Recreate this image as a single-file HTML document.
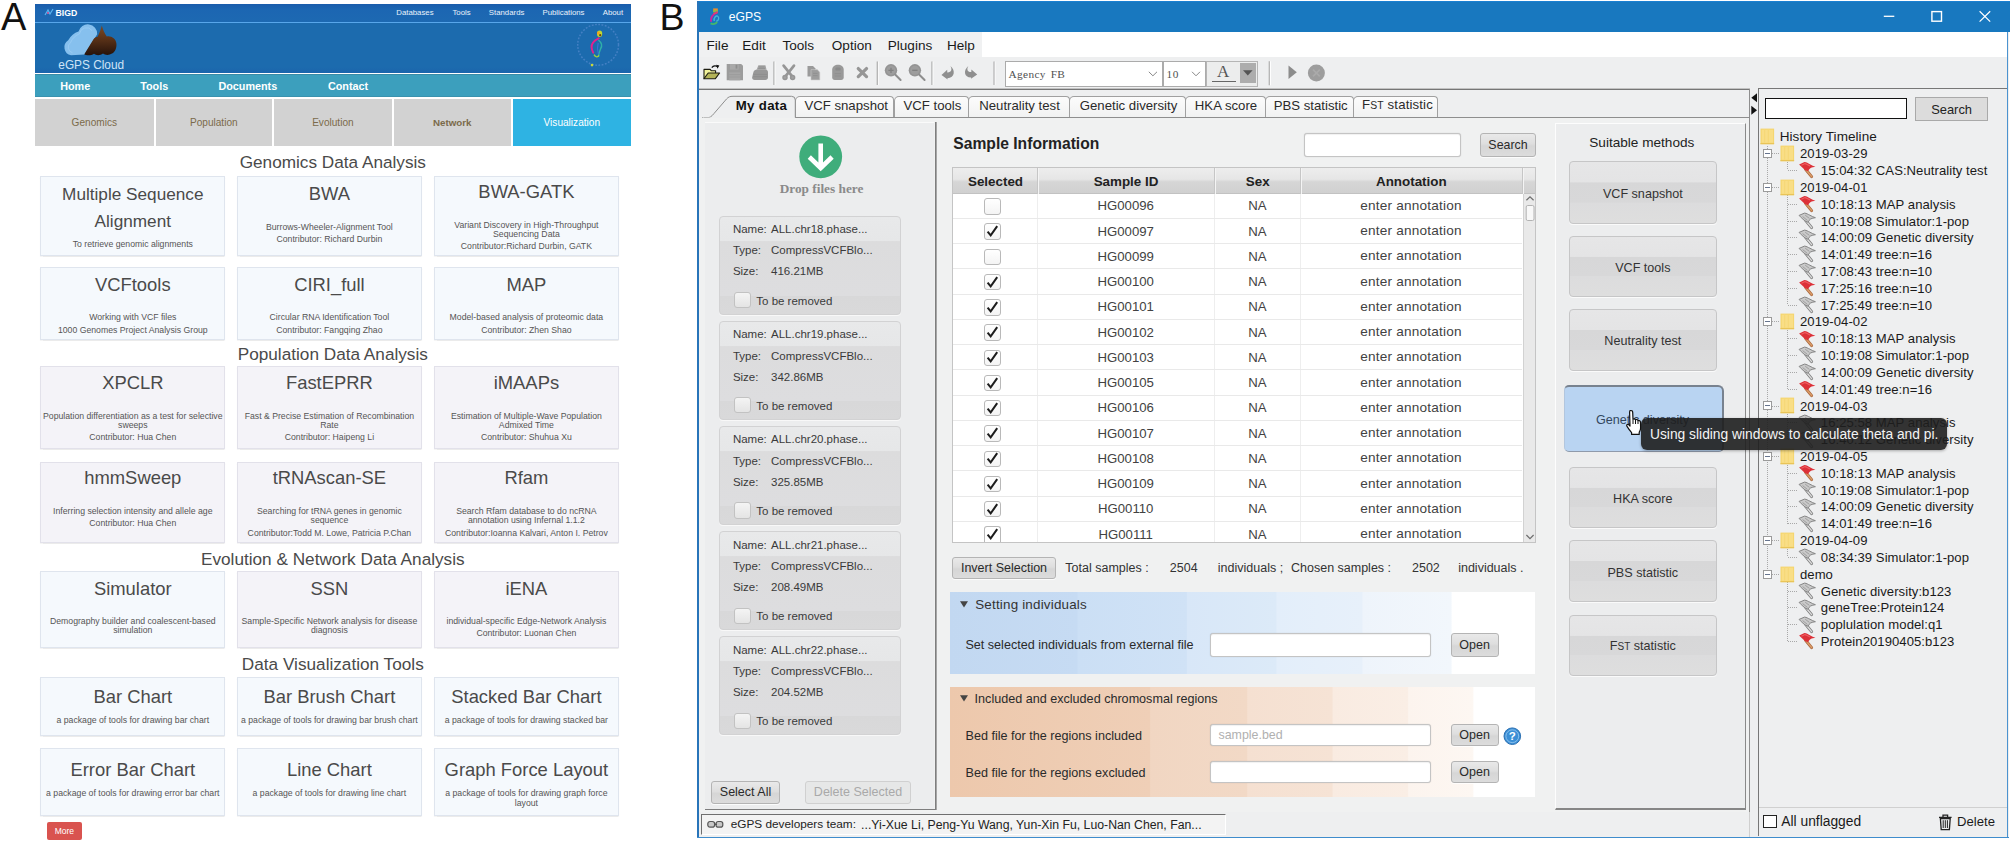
<!DOCTYPE html>
<html lang="en"><head><meta charset="utf-8"><title>eGPS</title>
<style>
html,body{margin:0;padding:0;background:#fff;}
body{width:2010px;height:844px;position:relative;overflow:hidden;font-family:"Liberation Sans",sans-serif;}
#root{position:absolute;left:0;top:0;width:2010px;height:844px;overflow:hidden;}
#root div,#root svg.a{position:absolute;}
.t{white-space:nowrap;}
</style></head><body><div id="root">
<div class="t" style='top:-8.0px;font-size:38px;line-height:51px;color:#111;left:1.0px;'>A</div>
<div style="left:35.0px;top:4.0px;width:596.0px;height:18.4px;background:linear-gradient(#1a5cab,#1c66b2 30%,#1d69b2);"></div>
<div style="left:35.0px;top:22.2px;width:596.0px;height:1.0px;background:#58a6ea;"></div>
<div style="left:35.0px;top:23.2px;width:596.0px;height:49.8px;background:linear-gradient(#1c6bae 0,#1c6bae 88%,#1b64ac 100%);"></div>
<div style="left:35.0px;top:74.3px;width:596.0px;height:22.7px;background:#3c9fbd;border-top:1px solid #3a8aa6;border-bottom:1px solid #3a92ae;box-sizing:border-box;"></div>
<svg class="a" style="left:43.5px;top:8px" width="10" height="10" viewBox="0 0 10 10"><path d="M1 7 L4 2 L6 6 L9 1" stroke="#5bb4f0" stroke-width="1.2" fill="none"/><circle cx="4" cy="5" r="1" fill="#e0559a"/></svg>
<div class="t" style='top:7.0px;font-size:8.7px;line-height:13px;color:#fff;font-weight:bold;left:55.6px;'>BIGD</div>
<div class="t" style='top:7.3px;font-size:7.8px;line-height:12px;color:#eaf2fb;left:414.9px;transform:translateX(-50%);'>Databases</div>
<div class="t" style='top:7.3px;font-size:7.8px;line-height:12px;color:#eaf2fb;left:461.5px;transform:translateX(-50%);'>Tools</div>
<div class="t" style='top:7.3px;font-size:7.8px;line-height:12px;color:#eaf2fb;left:506.6px;transform:translateX(-50%);'>Standards</div>
<div class="t" style='top:7.3px;font-size:7.8px;line-height:12px;color:#eaf2fb;left:563.5px;transform:translateX(-50%);'>Publications</div>
<div class="t" style='top:7.3px;font-size:7.8px;line-height:12px;color:#eaf2fb;left:612.9px;transform:translateX(-50%);'>About</div>
<svg class="a" style="left:60px;top:23px" width="62" height="35" viewBox="60 23 62 35">
<defs><linearGradient id="brn" x1="0" y1="0" x2="0" y2="1"><stop offset="0" stop-color="#7a4a26"/><stop offset=".45" stop-color="#5a3218"/><stop offset="1" stop-color="#26120a"/></linearGradient></defs>
<path d="M71 55.3 A8.3 8.3 0 0 1 68.2 40.2 Q72 33.5 78.5 31.5 A9.5 9.5 0 0 1 97.2 34.2 L84.5 54.6 Z" fill="#86c0ee"/>
<path d="M72.5 52.8 A5.8 5.8 0 0 1 70.5 42.6 Q73.5 36 79.5 33.8 A7 7 0 0 1 92 30.5" stroke="#a9d4f6" stroke-width=".7" fill="none" opacity=".7"/>
<path d="M84.3 54.2 L93.5 39.2 C94.5 37.6 96 37 97.6 36.8 C99.5 33 100.8 29 101.8 25.4 C102.8 29 104.5 33.5 106.8 36.4 C111 35.4 116 38.5 116.4 43.5 C116.9 48 115 52 112 53.6 C109 55.6 105 55.2 103 53.6 C100 55.8 96 55.6 94 53.8 C91 55.8 86 55.6 84.3 54.2 Z" fill="url(#brn)"/>
</svg>
<div class="t" style='top:57.0px;font-size:11.85px;line-height:17px;color:#cfe4f7;left:58.3px;'>eGPS Cloud</div>
<svg class="a" style="left:574px;top:22px" width="50" height="48" viewBox="574 22 50 48">
<circle cx="598.1" cy="44.8" r="20.4" fill="none" stroke="#5e8ed2" stroke-width="1.5" stroke-dasharray="1.8 1.5" opacity=".6"/>
<path d="M598.6 38.4 C594.5 40.5 591.2 44 591.6 47.5 C591.8 49.5 592.4 51 593.2 52.6" stroke="#e2218f" stroke-width="2" fill="none" stroke-linecap="round"/>
<path d="M598.4 40 C601.5 42.5 602.5 46 600.5 49 C599.5 51.5 598.6 54 598.4 56.6" stroke="#2fb0a8" stroke-width="1.4" fill="none"/>
<path d="M598.2 43 C597 47 597.4 51 598.4 54" stroke="#3b74d8" stroke-width="1.1" fill="none"/>
<path d="M594 54.6 C595.4 57.4 598 57.4 599 55.4" stroke="#9fd23c" stroke-width="1.3" fill="none"/>
<ellipse cx="599.6" cy="33.8" rx="2.6" ry="3.3" fill="#bfd730"/><circle cx="598.4" cy="33" r="1.5" fill="#f4a21f"/><circle cx="600.2" cy="35.2" r="1.1" fill="#6a3a1a"/>
<circle cx="592" cy="65.1" r="1.3" fill="#c9d83a"/>
</svg>
<div class="t" style='top:78.0px;font-size:10.8px;line-height:16px;color:#fff;font-weight:bold;left:75.2px;transform:translateX(-50%);'>Home</div>
<div class="t" style='top:78.0px;font-size:10.8px;line-height:16px;color:#fff;font-weight:bold;left:154.2px;transform:translateX(-50%);'>Tools</div>
<div class="t" style='top:78.0px;font-size:10.8px;line-height:16px;color:#fff;font-weight:bold;left:247.8px;transform:translateX(-50%);'>Documents</div>
<div class="t" style='top:78.0px;font-size:10.8px;line-height:16px;color:#fff;font-weight:bold;left:348.0px;transform:translateX(-50%);'>Contact</div>
<div style="left:35.0px;top:99.0px;width:118.7px;height:47.1px;background:#d2d2d2;"></div>
<div class="t" style='top:115.2px;font-size:10.1px;line-height:15px;color:#7b6a4a;left:94.3px;transform:translateX(-50%);'>Genomics</div>
<div style="left:155.7px;top:99.0px;width:116.3px;height:47.1px;background:#d2d2d2;"></div>
<div class="t" style='top:115.2px;font-size:10.1px;line-height:15px;color:#7b6a4a;left:213.8px;transform:translateX(-50%);'>Population</div>
<div style="left:274.0px;top:99.0px;width:117.8px;height:47.1px;background:#d2d2d2;"></div>
<div class="t" style='top:115.2px;font-size:10.1px;line-height:15px;color:#7b6a4a;left:332.9px;transform:translateX(-50%);'>Evolution</div>
<div style="left:393.8px;top:99.0px;width:116.9px;height:47.1px;background:#d2d2d2;"></div>
<div class="t" style='top:115.2px;font-size:9.75px;line-height:15px;color:#7b6a4a;font-weight:bold;left:452.2px;transform:translateX(-50%);'>Network</div>
<div style="left:512.5px;top:99.0px;width:118.5px;height:47.1px;background:#2eb3e3;"></div>
<div class="t" style='top:115.2px;font-size:10.1px;line-height:15px;color:#fff;left:571.8px;transform:translateX(-50%);'>Visualization</div>
<div class="t" style='top:150.3px;font-size:17.2px;line-height:24px;color:#4a4a4a;left:332.8px;transform:translateX(-50%);'>Genomics Data Analysis</div>
<div class="t" style='top:341.5px;font-size:17.2px;line-height:24px;color:#4a4a4a;left:332.8px;transform:translateX(-50%);'>Population Data Analysis</div>
<div class="t" style='top:547.1px;font-size:17.2px;line-height:24px;color:#4a4a4a;left:332.8px;transform:translateX(-50%);'>Evolution &amp; Network Data Analysis</div>
<div class="t" style='top:651.6px;font-size:17.2px;line-height:24px;color:#4a4a4a;left:332.8px;transform:translateX(-50%);'>Data Visualization Tools</div>
<div style="left:40.2px;top:176.4px;width:185.2px;height:79.2px;background:#f5f9fd;border:1px solid #dfe5ee;box-sizing:border-box;box-shadow:0 0.5px 1px rgba(0,0,0,.08);"></div>
<div class="t" style='top:181.6px;font-size:17.2px;line-height:24px;color:#4a4a4a;left:132.8px;transform:translateX(-50%);'>Multiple Sequence</div>
<div class="t" style='top:209.2px;font-size:17.2px;line-height:24px;color:#4a4a4a;left:132.8px;transform:translateX(-50%);'>Alignment</div>
<div class="t" style='top:238.2px;font-size:8.7px;line-height:13px;color:#555;left:132.8px;transform:translateX(-50%);'>To retrieve genomic alignments</div>
<div style="left:237.1px;top:176.4px;width:184.7px;height:79.2px;background:#f5f9fd;border:1px solid #dfe5ee;box-sizing:border-box;box-shadow:0 0.5px 1px rgba(0,0,0,.08);"></div>
<div class="t" style='top:180.9px;font-size:18.4px;line-height:26px;color:#4a4a4a;left:329.4px;transform:translateX(-50%);'>BWA</div>
<div class="t" style='top:220.9px;font-size:8.7px;line-height:13px;color:#555;left:329.4px;transform:translateX(-50%);'>Burrows-Wheeler-Alignment Tool</div>
<div class="t" style='top:233.1px;font-size:8.7px;line-height:13px;color:#555;left:329.4px;transform:translateX(-50%);'>Contributor: Richard Durbin</div>
<div style="left:433.7px;top:176.4px;width:185.4px;height:79.2px;background:#f5f9fd;border:1px solid #dfe5ee;box-sizing:border-box;box-shadow:0 0.5px 1px rgba(0,0,0,.08);"></div>
<div class="t" style='top:178.9px;font-size:18.4px;line-height:26px;color:#4a4a4a;left:526.4px;transform:translateX(-50%);'>BWA-GATK</div>
<div class="t" style='top:218.7px;font-size:8.7px;line-height:13px;color:#555;left:526.4px;transform:translateX(-50%);'>Variant Discovery in High-Throughput</div>
<div class="t" style='top:227.9px;font-size:8.7px;line-height:13px;color:#555;left:526.4px;transform:translateX(-50%);'>Sequencing Data</div>
<div class="t" style='top:240.0px;font-size:8.7px;line-height:13px;color:#555;left:526.4px;transform:translateX(-50%);'>Contributor:Richard Durbin, GATK</div>
<div style="left:40.2px;top:267.3px;width:185.2px;height:72.7px;background:#f5f9fd;border:1px solid #dfe5ee;box-sizing:border-box;box-shadow:0 0.5px 1px rgba(0,0,0,.08);"></div>
<div class="t" style='top:272.0px;font-size:18.4px;line-height:26px;color:#4a4a4a;left:132.8px;transform:translateX(-50%);'>VCFtools</div>
<div class="t" style='top:311.4px;font-size:8.7px;line-height:13px;color:#555;left:132.8px;transform:translateX(-50%);'>Working with VCF files</div>
<div class="t" style='top:323.8px;font-size:8.7px;line-height:13px;color:#555;left:132.8px;transform:translateX(-50%);'>1000 Genomes Project Analysis Group</div>
<div style="left:237.1px;top:267.3px;width:184.7px;height:72.7px;background:#f5f9fd;border:1px solid #dfe5ee;box-sizing:border-box;box-shadow:0 0.5px 1px rgba(0,0,0,.08);"></div>
<div class="t" style='top:272.0px;font-size:18.4px;line-height:26px;color:#4a4a4a;left:329.4px;transform:translateX(-50%);'>CIRI_full</div>
<div class="t" style='top:311.4px;font-size:8.7px;line-height:13px;color:#555;left:329.4px;transform:translateX(-50%);'>Circular RNA Identification Tool</div>
<div class="t" style='top:323.8px;font-size:8.7px;line-height:13px;color:#555;left:329.4px;transform:translateX(-50%);'>Contributor: Fangqing Zhao</div>
<div style="left:433.7px;top:267.3px;width:185.4px;height:72.7px;background:#f5f9fd;border:1px solid #dfe5ee;box-sizing:border-box;box-shadow:0 0.5px 1px rgba(0,0,0,.08);"></div>
<div class="t" style='top:272.0px;font-size:18.4px;line-height:26px;color:#4a4a4a;left:526.4px;transform:translateX(-50%);'>MAP</div>
<div class="t" style='top:311.4px;font-size:8.7px;line-height:13px;color:#555;left:526.4px;transform:translateX(-50%);'>Model-based analysis of proteomic data</div>
<div class="t" style='top:323.8px;font-size:8.7px;line-height:13px;color:#555;left:526.4px;transform:translateX(-50%);'>Contributor: Zhen Shao</div>
<div style="left:40.2px;top:365.6px;width:185.2px;height:83.9px;background:#f4f3f8;border:1px solid #e2e1ea;box-sizing:border-box;box-shadow:0 0.5px 1px rgba(0,0,0,.08);"></div>
<div class="t" style='top:370.1px;font-size:18.4px;line-height:26px;color:#4a4a4a;left:132.8px;transform:translateX(-50%);'>XPCLR</div>
<div class="t" style='top:409.5px;font-size:8.7px;line-height:13px;color:#555;left:132.8px;transform:translateX(-50%);'>Population differentiation as a test for selective</div>
<div class="t" style='top:418.8px;font-size:8.7px;line-height:13px;color:#555;left:132.8px;transform:translateX(-50%);'>sweeps</div>
<div class="t" style='top:431.2px;font-size:8.7px;line-height:13px;color:#555;left:132.8px;transform:translateX(-50%);'>Contributor: Hua Chen</div>
<div style="left:237.1px;top:365.6px;width:184.7px;height:83.9px;background:#f4f3f8;border:1px solid #e2e1ea;box-sizing:border-box;box-shadow:0 0.5px 1px rgba(0,0,0,.08);"></div>
<div class="t" style='top:370.1px;font-size:18.4px;line-height:26px;color:#4a4a4a;left:329.4px;transform:translateX(-50%);'>FastEPRR</div>
<div class="t" style='top:409.5px;font-size:8.7px;line-height:13px;color:#555;left:329.4px;transform:translateX(-50%);'>Fast &amp; Precise Estimation of Recombination</div>
<div class="t" style='top:418.8px;font-size:8.7px;line-height:13px;color:#555;left:329.4px;transform:translateX(-50%);'>Rate</div>
<div class="t" style='top:431.2px;font-size:8.7px;line-height:13px;color:#555;left:329.4px;transform:translateX(-50%);'>Contributor: Haipeng Li</div>
<div style="left:433.7px;top:365.6px;width:185.4px;height:83.9px;background:#f4f3f8;border:1px solid #e2e1ea;box-sizing:border-box;box-shadow:0 0.5px 1px rgba(0,0,0,.08);"></div>
<div class="t" style='top:370.1px;font-size:18.4px;line-height:26px;color:#4a4a4a;left:526.4px;transform:translateX(-50%);'>iMAAPs</div>
<div class="t" style='top:409.5px;font-size:8.7px;line-height:13px;color:#555;left:526.4px;transform:translateX(-50%);'>Estimation of Multiple-Wave Population</div>
<div class="t" style='top:418.8px;font-size:8.7px;line-height:13px;color:#555;left:526.4px;transform:translateX(-50%);'>Admixed Time</div>
<div class="t" style='top:431.2px;font-size:8.7px;line-height:13px;color:#555;left:526.4px;transform:translateX(-50%);'>Contributor: Shuhua Xu</div>
<div style="left:40.2px;top:461.6px;width:185.2px;height:81.7px;background:#f4f3f8;border:1px solid #e2e1ea;box-sizing:border-box;box-shadow:0 0.5px 1px rgba(0,0,0,.08);"></div>
<div class="t" style='top:465.4px;font-size:18.4px;line-height:26px;color:#4a4a4a;left:132.8px;transform:translateX(-50%);'>hmmSweep</div>
<div class="t" style='top:504.8px;font-size:8.7px;line-height:13px;color:#555;left:132.8px;transform:translateX(-50%);'>Inferring selection intensity and allele age</div>
<div class="t" style='top:517.2px;font-size:8.7px;line-height:13px;color:#555;left:132.8px;transform:translateX(-50%);'>Contributor: Hua Chen</div>
<div style="left:237.1px;top:461.6px;width:184.7px;height:81.7px;background:#f4f3f8;border:1px solid #e2e1ea;box-sizing:border-box;box-shadow:0 0.5px 1px rgba(0,0,0,.08);"></div>
<div class="t" style='top:465.4px;font-size:18.4px;line-height:26px;color:#4a4a4a;left:329.4px;transform:translateX(-50%);'>tRNAscan-SE</div>
<div class="t" style='top:504.8px;font-size:8.7px;line-height:13px;color:#555;left:329.4px;transform:translateX(-50%);'>Searching for tRNA genes in genomic</div>
<div class="t" style='top:514.1px;font-size:8.7px;line-height:13px;color:#555;left:329.4px;transform:translateX(-50%);'>sequence</div>
<div class="t" style='top:526.5px;font-size:8.7px;line-height:13px;color:#555;left:329.4px;transform:translateX(-50%);'>Contributor:Todd M. Lowe, Patricia P.Chan</div>
<div style="left:433.7px;top:461.6px;width:185.4px;height:81.7px;background:#f4f3f8;border:1px solid #e2e1ea;box-sizing:border-box;box-shadow:0 0.5px 1px rgba(0,0,0,.08);"></div>
<div class="t" style='top:465.4px;font-size:18.4px;line-height:26px;color:#4a4a4a;left:526.4px;transform:translateX(-50%);'>Rfam</div>
<div class="t" style='top:504.8px;font-size:8.7px;line-height:13px;color:#555;left:526.4px;transform:translateX(-50%);'>Search Rfam database to do ncRNA</div>
<div class="t" style='top:514.1px;font-size:8.7px;line-height:13px;color:#555;left:526.4px;transform:translateX(-50%);'>annotation using Infernal 1.1.2</div>
<div class="t" style='top:526.5px;font-size:8.7px;line-height:13px;color:#555;left:526.4px;transform:translateX(-50%);'>Contributor:Ioanna Kalvari, Anton I. Petrov</div>
<div style="left:40.2px;top:571.4px;width:185.2px;height:76.9px;background:#f5f9fd;border:1px solid #dfe5ee;box-sizing:border-box;box-shadow:0 0.5px 1px rgba(0,0,0,.08);"></div>
<div class="t" style='top:575.6px;font-size:18.4px;line-height:26px;color:#4a4a4a;left:132.8px;transform:translateX(-50%);'>Simulator</div>
<div class="t" style='top:614.8px;font-size:8.7px;line-height:13px;color:#555;left:132.8px;transform:translateX(-50%);'>Demography builder and coalescent-based</div>
<div class="t" style='top:624.2px;font-size:8.7px;line-height:13px;color:#555;left:132.8px;transform:translateX(-50%);'>simulation</div>
<div style="left:237.1px;top:571.4px;width:184.7px;height:76.9px;background:#f4f3f8;border:1px solid #e2e1ea;box-sizing:border-box;box-shadow:0 0.5px 1px rgba(0,0,0,.08);"></div>
<div class="t" style='top:575.6px;font-size:18.4px;line-height:26px;color:#4a4a4a;left:329.4px;transform:translateX(-50%);'>SSN</div>
<div class="t" style='top:614.8px;font-size:8.7px;line-height:13px;color:#555;left:329.4px;transform:translateX(-50%);'>Sample-Specific Network analysis for disease</div>
<div class="t" style='top:624.2px;font-size:8.7px;line-height:13px;color:#555;left:329.4px;transform:translateX(-50%);'>diagnosis</div>
<div style="left:433.7px;top:571.4px;width:185.4px;height:76.9px;background:#f4f3f8;border:1px solid #e2e1ea;box-sizing:border-box;box-shadow:0 0.5px 1px rgba(0,0,0,.08);"></div>
<div class="t" style='top:575.6px;font-size:18.4px;line-height:26px;color:#4a4a4a;left:526.4px;transform:translateX(-50%);'>iENA</div>
<div class="t" style='top:614.8px;font-size:8.7px;line-height:13px;color:#555;left:526.4px;transform:translateX(-50%);'>individual-specific Edge-Network Analysis</div>
<div class="t" style='top:627.4px;font-size:8.7px;line-height:13px;color:#555;left:526.4px;transform:translateX(-50%);'>Contributor: Luonan Chen</div>
<div style="left:40.2px;top:676.9px;width:185.2px;height:58.7px;background:#f5f9fd;border:1px solid #dfe5ee;box-sizing:border-box;box-shadow:0 0.5px 1px rgba(0,0,0,.08);"></div>
<div class="t" style='top:683.8px;font-size:18.4px;line-height:26px;color:#4a4a4a;left:132.8px;transform:translateX(-50%);'>Bar Chart</div>
<div class="t" style='top:713.9px;font-size:8.7px;line-height:13px;color:#555;left:132.8px;transform:translateX(-50%);'>a package of tools for drawing bar chart</div>
<div style="left:237.1px;top:676.9px;width:184.7px;height:58.7px;background:#f5f9fd;border:1px solid #dfe5ee;box-sizing:border-box;box-shadow:0 0.5px 1px rgba(0,0,0,.08);"></div>
<div class="t" style='top:683.8px;font-size:18.4px;line-height:26px;color:#4a4a4a;left:329.4px;transform:translateX(-50%);'>Bar Brush Chart</div>
<div class="t" style='top:713.9px;font-size:8.7px;line-height:13px;color:#555;left:329.4px;transform:translateX(-50%);'>a package of tools for drawing bar brush chart</div>
<div style="left:433.7px;top:676.9px;width:185.4px;height:58.7px;background:#f5f9fd;border:1px solid #dfe5ee;box-sizing:border-box;box-shadow:0 0.5px 1px rgba(0,0,0,.08);"></div>
<div class="t" style='top:683.8px;font-size:18.4px;line-height:26px;color:#4a4a4a;left:526.4px;transform:translateX(-50%);'>Stacked Bar Chart</div>
<div class="t" style='top:713.9px;font-size:8.7px;line-height:13px;color:#555;left:526.4px;transform:translateX(-50%);'>a package of tools for drawing stacked bar</div>
<div style="left:40.2px;top:748.2px;width:185.2px;height:67.4px;background:#f5f9fd;border:1px solid #dfe5ee;box-sizing:border-box;box-shadow:0 0.5px 1px rgba(0,0,0,.08);"></div>
<div class="t" style='top:756.6px;font-size:18.4px;line-height:26px;color:#4a4a4a;left:132.8px;transform:translateX(-50%);'>Error Bar Chart</div>
<div class="t" style='top:787.4px;font-size:8.7px;line-height:13px;color:#555;left:132.8px;transform:translateX(-50%);'>a package of tools for drawing error bar chart</div>
<div style="left:237.1px;top:748.2px;width:184.7px;height:67.4px;background:#f5f9fd;border:1px solid #dfe5ee;box-sizing:border-box;box-shadow:0 0.5px 1px rgba(0,0,0,.08);"></div>
<div class="t" style='top:756.6px;font-size:18.4px;line-height:26px;color:#4a4a4a;left:329.4px;transform:translateX(-50%);'>Line Chart</div>
<div class="t" style='top:787.4px;font-size:8.7px;line-height:13px;color:#555;left:329.4px;transform:translateX(-50%);'>a package of tools for drawing line chart</div>
<div style="left:433.7px;top:748.2px;width:185.4px;height:67.4px;background:#f5f9fd;border:1px solid #dfe5ee;box-sizing:border-box;box-shadow:0 0.5px 1px rgba(0,0,0,.08);"></div>
<div class="t" style='top:756.6px;font-size:18.4px;line-height:26px;color:#4a4a4a;left:526.4px;transform:translateX(-50%);'>Graph Force Layout</div>
<div class="t" style='top:787.4px;font-size:8.7px;line-height:13px;color:#555;left:526.4px;transform:translateX(-50%);'>a package of tools for drawing graph force</div>
<div class="t" style='top:796.8px;font-size:8.7px;line-height:13px;color:#555;left:526.4px;transform:translateX(-50%);'>layout</div>
<div style="left:46.8px;top:821.7px;width:35.2px;height:18.0px;background:#d9534f;border-radius:2px;"></div>
<div class="t" style='top:824.8px;font-size:8.5px;line-height:13px;color:#fff;left:64.4px;transform:translateX(-50%);'>More</div>
<div class="t" style='top:-8.0px;font-size:37.6px;line-height:51px;color:#111;left:659.6px;'>B</div>
<div style="left:697.5px;top:1.0px;width:1311.0px;height:836.5px;background:#eeeff0;"></div>
<div style="left:697.0px;top:1.4px;width:1313.0px;height:31.0px;background:#1878bf;border-top:1.4px solid #1a80d2;box-sizing:border-box;"></div>
<div style="left:697.0px;top:1.0px;width:2.0px;height:836.5px;background:#2874b9;"></div>
<div style="left:2007.4px;top:32.0px;width:1.1px;height:805.5px;background:#4b93d0;"></div>
<div style="left:697.0px;top:836.5px;width:1311.5px;height:1.1px;background:#3f8ccc;"></div>
<svg class="a" style="left:706px;top:5px" width="16" height="22" viewBox="706 5 16 22">
<rect x="713.2" y="8.4" width="4.6" height="3.8" fill="#e8912e"/><rect x="713.2" y="10.4" width="4.6" height="1.9" fill="#7cc04a"/>
<path d="M716.8 12.4 C713.4 14.2 710.6 17.4 711 21" stroke="#c42aa0" stroke-width="2" fill="none" stroke-linecap="round"/>
<path d="M713.4 13.6 L717.6 12.6" stroke="#e8406a" stroke-width="1.4"/>
<path d="M714.2 21 C713.6 17.6 716 15.4 717.6 16.2 C719.4 17.2 719 20.4 716.2 21.4" stroke="#45b4dc" stroke-width="1.3" fill="none"/>
<path d="M710.6 23.4 C713 24.6 716 24.2 717 21.8" stroke="#46b86a" stroke-width="1.8" fill="none"/>
</svg>
<div class="t" style='top:8.2px;font-size:12.2px;line-height:18px;color:#fff;left:728.7px;'>eGPS</div>
<svg class="a" style="left:1876px;top:6px" width="122" height="22" viewBox="0 0 122 22">
<path d="M7.8 10.3 H18.3" stroke="#fff" stroke-width="1.3"/>
<rect x="55.9" y="5.6" width="9.6" height="9.6" fill="none" stroke="#fff" stroke-width="1.4"/>
<path d="M103.6 5.2 L114.2 15.6 M114.2 5.2 L103.6 15.6" stroke="#fff" stroke-width="1.2"/>
</svg>
<div style="left:699.0px;top:32.3px;width:1308.3px;height:24.4px;background:#fff;"></div>
<div style="left:699.0px;top:32.3px;width:282.5px;height:24.4px;background:#f0f1f2;"></div>
<div class="t" style='top:35.8px;font-size:13.6px;line-height:20px;color:#1a1a1a;left:717.5px;transform:translateX(-50%);'>File</div>
<div class="t" style='top:35.8px;font-size:13.6px;line-height:20px;color:#1a1a1a;left:754.0px;transform:translateX(-50%);'>Edit</div>
<div class="t" style='top:35.8px;font-size:13.6px;line-height:20px;color:#1a1a1a;left:798.3px;transform:translateX(-50%);'>Tools</div>
<div class="t" style='top:35.8px;font-size:13.6px;line-height:20px;color:#1a1a1a;left:851.8px;transform:translateX(-50%);'>Option</div>
<div class="t" style='top:35.8px;font-size:13.6px;line-height:20px;color:#1a1a1a;left:910.0px;transform:translateX(-50%);'>Plugins</div>
<div class="t" style='top:35.8px;font-size:13.6px;line-height:20px;color:#1a1a1a;left:960.9px;transform:translateX(-50%);'>Help</div>
<div style="left:699.0px;top:88.0px;width:1050.5px;height:0.8px;background:#c2c2c2;"></div>
<div style="left:699.0px;top:88.7px;width:1050.5px;height:1.2px;background:#767676;"></div>
<svg class="a" style="left:700px;top:58px" width="640" height="30" viewBox="700 58 640 30">
<!-- open folder -->
<path d="M704 78.6 V69.4 H710.2 L711.4 70.8 H715.6 V73" fill="#f2f29a" stroke="#1c1c10" stroke-width="1.1" stroke-linejoin="round"/>
<path d="M703.8 78.8 L708.2 73 H719.6 L715.2 78.8 Z" fill="#b4b458" stroke="#1c1c10" stroke-width="1.1" stroke-linejoin="round"/>
<path d="M711.8 67.6 C713.4 65.6 716 65.4 717.6 66.8" stroke="#111" stroke-width="1.3" fill="none"/><path d="M716.2 64.8 L719.4 65.6 L717.4 68.8 Z" fill="#111"/>
<!-- save -->
<path d="M726.7 64 H741.2 L743 65.8 V80.3 H726.7 Z" fill="#9c9c9c"/>
<rect x="730" y="64" width="8.6" height="5.6" fill="#a9a9a9"/><rect x="735.6" y="64.8" width="1.8" height="3.8" fill="#8e8e8e"/>
<rect x="729.2" y="72.4" width="11.2" height="7.9" fill="#a6a6a6"/><path d="M729.2 74.6 H740.4 M729.2 77 H740.4" stroke="#9a9a9a" stroke-width=".7"/>
<!-- print -->
<path d="M753.4 72.2 C753.8 70.4 755.6 69.6 757 69.6 H765 C766.8 69.6 768 70.6 768 72.4 V77.6 C768 79.2 766.8 79.9 765.4 79.9 H754.6 C753 79.9 752.1 79 752.1 77.6 Z" fill="#979797"/>
<path d="M756.6 69.8 L758.4 65.2 H765.4 L766.6 69.8 Z" fill="#a4a4a4"/><path d="M758.8 67 H764.6 M758.2 68.6 H765" stroke="#8a8a8a" stroke-width=".7"/>
<path d="M753.4 74.4 H767 M753.2 76.6 H767" stroke="#8b8b8b" stroke-width=".8"/>
<!-- sep -->
<path d="M774 61.6 V85" stroke="#a6a6a6" stroke-width="1.2"/><path d="M775.1 61.6 V85" stroke="#fafafa" stroke-width="1"/>
<!-- cut -->
<path d="M783.6 65.6 L792.4 76.6 M794 65.6 L785.2 76.6" stroke="#969696" stroke-width="2.7" stroke-linecap="round"/>
<circle cx="785" cy="77.4" r="2" fill="#a2a2a2" stroke="#969696" stroke-width="1.5"/><circle cx="792.6" cy="77.4" r="2" fill="#a2a2a2" stroke="#969696" stroke-width="1.5"/>
<!-- copy -->
<path d="M807.5 66 H813 L815.2 68.2 V76.4 H807.5 Z" fill="#9a9a9a"/>
<path d="M811 69.6 H817.2 L819.8 72.2 V79.9 H811 Z" fill="#9d9d9d" stroke="#c9c9c9" stroke-width=".6"/><path d="M813 73.4 H817.6 M813 75.6 H817.6" stroke="#8c8c8c" stroke-width=".7"/>
<!-- paste -->
<path d="M832.2 69.6 C832.2 66.6 835 64.8 838 64.8 C841 64.8 843.7 66.6 843.7 69.6 V77.4 C843.7 79 842.6 79.9 841.2 79.9 H834.8 C833.2 79.9 832.2 79 832.2 77.4 Z" fill="#999"/>
<rect x="835.4" y="67.4" width="5.2" height="3.2" rx="1.2" fill="#8a8a8a"/><path d="M834.8 73.6 H841 M834.8 76 H841" stroke="#8c8c8c" stroke-width=".7"/>
<!-- delete x -->
<path d="M858.3 68.6 L866.5 76.6 M866.5 68.6 L858.3 76.6" stroke="#969696" stroke-width="3.3" stroke-linecap="round"/>
<path d="M877.3 61.6 V85" stroke="#a6a6a6" stroke-width="1.2"/><path d="M878.4 61.6 V85" stroke="#fafafa" stroke-width="1"/>
<!-- zoom in -->
<circle cx="891" cy="70.3" r="6.2" fill="#949494"/><circle cx="891" cy="70.3" r="4.6" fill="#9d9d9d"/>
<path d="M895.4 74.8 L900.6 80" stroke="#8e8e8e" stroke-width="2" stroke-linecap="round"/>
<path d="M888.4 70.3 H893.6 M891 67.7 V72.9" stroke="#808080" stroke-width="1.3"/>
<!-- zoom out -->
<circle cx="914.9" cy="70.3" r="6.2" fill="#949494"/><circle cx="914.9" cy="70.3" r="4.6" fill="#9d9d9d"/>
<path d="M919.3 74.8 L924.6 80" stroke="#8e8e8e" stroke-width="2" stroke-linecap="round"/>
<path d="M912.2 70.3 H917.6" stroke="#808080" stroke-width="1.3"/>
<path d="M932 61.6 V85" stroke="#a6a6a6" stroke-width="1.2"/><path d="M933.1 61.6 V85" stroke="#fafafa" stroke-width="1"/>
<!-- undo -->
<path d="M950.4 66 C955.6 70 955 78 947.4 78.2 L947.6 79.4 L941.5 75 L947.2 69.8 L947.3 72.4 C951.4 72.6 952.4 69.4 950.4 66 Z" fill="#8f8f8f"/>
<!-- redo -->
<path d="M968.4 66 C963.2 70 963.8 77.4 971.2 77.6 L971 78.8 L977.2 74.4 L971.4 69.4 L971.3 72 C967.4 72.2 966.4 69.2 968.4 66 Z" fill="#8f8f8f"/>
<path d="M994.1 61.6 V85" stroke="#a6a6a6" stroke-width="1.2"/><path d="M995.2 61.6 V85" stroke="#fafafa" stroke-width="1"/>
<!-- sep, play, stop -->
<path d="M1269.3 61.3 V85.3" stroke="#a8a8a8" stroke-width="1.2"/><path d="M1270.4 61.3 V85.3" stroke="#fff" stroke-width="1"/>
<path d="M1288.5 65.5 L1296.8 72.3 L1288.5 79 Z" fill="#8c8c8c"/>
<circle cx="1316.4" cy="73" r="8.5" fill="#9d9d9d"/>
<path d="M1313 69.6 L1319.8 76.4 M1319.8 69.6 L1313 76.4" stroke="#aaa" stroke-width="1.6"/>
</svg>
<div style="left:1005.3px;top:60.6px;width:158.1px;height:26.0px;background:#fff;border:1px solid #ababab;box-sizing:border-box;"></div>
<div class="t" style='top:65.5px;font-size:11.3px;line-height:17px;color:#505050;font-family:"Liberation Serif", serif;letter-spacing:0.4px;left:1008.4px;word-spacing:1.5px;'>Agency FB</div>
<div style="left:1162.6px;top:60.6px;width:43.8px;height:26.0px;background:#fff;border:1px solid #ababab;box-sizing:border-box;"></div>
<div class="t" style='top:65.5px;font-size:11.3px;line-height:17px;color:#505050;font-family:"Liberation Serif", serif;letter-spacing:0.4px;left:1166.6px;'>10</div>
<svg class="a" style="left:1146px;top:68px" width="60" height="12" viewBox="1146 68 60 12">
<path d="M1148.8 71.8 L1152.9 75.8 L1157 71.8" stroke="#888" stroke-width="1" fill="none"/>
<path d="M1192 71.8 L1196 75.8 L1200 71.8" stroke="#888" stroke-width="1" fill="none"/></svg>
<div style="left:1206.2px;top:60.6px;width:51.6px;height:26.0px;background:#eceded;border:1px solid #b5b5b5;box-sizing:border-box;"></div>
<div class="t" style='top:60.3px;font-size:17px;line-height:24px;color:#555;font-family:"Liberation Serif", serif;left:1223.2px;transform:translateX(-50%);'>A</div>
<div style="left:1211.5px;top:80.6px;width:24.9px;height:1.4px;background:#666;"></div>
<div style="left:1239.6px;top:63.4px;width:16.4px;height:19.6px;background:#adadad;"></div>
<svg class="a" style="left:1242px;top:69px" width="12" height="8" viewBox="0 0 12 8"><path d="M1 1.3 H10.6 L5.8 6.6 Z" fill="#555"/></svg>
<div style="left:704.0px;top:116.6px;width:1045.5px;height:1.1px;background:#8e8e8e;"></div>
<div style="left:795.2px;top:95.8px;width:99.3px;height:21.4px;background:linear-gradient(#fcfcfc,#f1f2f2);border:1px solid #a0a0a0;border-bottom:none;border-radius:5px 4px 0 0;box-sizing:border-box;"></div>
<div class="t" style='top:96.1px;font-size:13.2px;line-height:19px;color:#2a2a2a;left:846.2px;transform:translateX(-50%);'>VCF snapshot</div>
<div style="left:893.5px;top:95.8px;width:75.1px;height:21.4px;background:linear-gradient(#fcfcfc,#f1f2f2);border:1px solid #a0a0a0;border-bottom:none;border-radius:5px 4px 0 0;box-sizing:border-box;"></div>
<div class="t" style='top:96.1px;font-size:13.2px;line-height:19px;color:#2a2a2a;left:932.4px;transform:translateX(-50%);'>VCF tools</div>
<div style="left:967.6px;top:95.8px;width:102.4px;height:21.4px;background:linear-gradient(#fcfcfc,#f1f2f2);border:1px solid #a0a0a0;border-bottom:none;border-radius:5px 4px 0 0;box-sizing:border-box;"></div>
<div class="t" style='top:96.1px;font-size:13.2px;line-height:19px;color:#2a2a2a;left:1019.5px;transform:translateX(-50%);'>Neutrality test</div>
<div style="left:1069.0px;top:95.8px;width:116.9px;height:21.4px;background:linear-gradient(#fcfcfc,#f1f2f2);border:1px solid #a0a0a0;border-bottom:none;border-radius:5px 4px 0 0;box-sizing:border-box;"></div>
<div class="t" style='top:96.1px;font-size:13.2px;line-height:19px;color:#2a2a2a;left:1128.5px;transform:translateX(-50%);'>Genetic diversity</div>
<div style="left:1184.9px;top:95.8px;width:80.9px;height:21.4px;background:linear-gradient(#fcfcfc,#f1f2f2);border:1px solid #a0a0a0;border-bottom:none;border-radius:5px 4px 0 0;box-sizing:border-box;"></div>
<div class="t" style='top:96.1px;font-size:13.2px;line-height:19px;color:#2a2a2a;left:1226.0px;transform:translateX(-50%);'>HKA score</div>
<div style="left:1264.8px;top:95.8px;width:89.6px;height:21.4px;background:linear-gradient(#fcfcfc,#f1f2f2);border:1px solid #a0a0a0;border-bottom:none;border-radius:5px 4px 0 0;box-sizing:border-box;"></div>
<div class="t" style='top:96.1px;font-size:13.2px;line-height:19px;color:#2a2a2a;left:1310.7px;transform:translateX(-50%);'>PBS statistic</div>
<div style="left:1353.4px;top:95.8px;width:84.6px;height:21.4px;background:linear-gradient(#fcfcfc,#f1f2f2);border:1px solid #a0a0a0;border-bottom:none;border-radius:5px 4px 0 0;box-sizing:border-box;"></div>
<div class="t" style="left:1362.0px;top:95.4px;font-size:13.2px;line-height:20px;color:#2a2a2a;letter-spacing:.15px">F<span style="font-size:10.4px">ST</span> statistic</div>
<svg class="a" style="left:700px;top:94px" width="98" height="26" viewBox="700 94 98 26">
<path d="M702 117.9 H706.5 C710 117.9 711.5 116.5 714 113.5 L726.5 99 C728.5 96.8 730 96.3 733 96.3 H791.5 Q795.3 96.3 795.3 100 V117.9" fill="#eeeff0" stroke="#8e8e8e" stroke-width="1"/>
<path d="M703 118.6 H794.8" stroke="#eeeff0" stroke-width="2.2"/>
</svg>
<div class="t" style='top:96.2px;font-size:13.2px;line-height:19px;color:#111;font-weight:bold;letter-spacing:0.34px;left:761.5px;transform:translateX(-50%);'>My data</div>
<div style="left:1748.6px;top:89.0px;width:1.1px;height:723.0px;background:#8e8e8e;"></div>
<div style="left:1748.6px;top:812.0px;width:1.1px;height:24.5px;background:#cfcfcf;"></div>
<svg class="a" style="left:1750px;top:92px" width="8" height="24" viewBox="0 0 8 24"><path d="M7 1.3 V10.3 L1.3 5.8 Z" fill="#111"/><path d="M1.3 13.8 V22.8 L7 18.3 Z" fill="#111"/></svg>
<div style="left:700.8px;top:814.4px;width:524.8px;height:20.4px;background:#f3f3f3;border-top:1.4px solid #6f6f6f;border-left:1.4px solid #6f6f6f;border-right:1px solid #fff;border-bottom:1px solid #fff;box-sizing:border-box;"></div>
<svg class="a" style="left:707px;top:819px" width="17" height="11" viewBox="0 0 17 11">
<rect x="0.8" y="2.5" width="6.8" height="5.6" rx="2.2" fill="#c8c8c8" stroke="#555" stroke-width="1.2"/>
<rect x="9" y="2.5" width="6.8" height="5.6" rx="2.2" fill="#c8c8c8" stroke="#555" stroke-width="1.2"/>
<path d="M7 5.3 H10" stroke="#555" stroke-width="1.4"/></svg>
<div class="t" style='top:816.1px;font-size:11.8px;line-height:17px;color:#222;left:730.7px;'>eGPS developers team:</div>
<div class="t" style='top:815.8px;font-size:12.27px;line-height:18px;color:#222;left:861.1px;'>...Yi-Xue Li, Peng-Yu Wang, Yun-Xin Fu, Luo-Nan Chen, Fan...</div>
<div style="left:699.0px;top:118.0px;width:1049.6px;height:694.0px;background:#f0f1f1;"></div>
<div style="left:704.8px;top:122.2px;width:229.6px;height:687.4px;background:#ecedee;border-top:1px solid #fafafa;box-sizing:border-box;"></div>
<div style="left:704.8px;top:808.7px;width:231.2px;height:1.8px;background:#7e7e7e;"></div>
<div style="left:934.8px;top:122.2px;width:2.2px;height:687.8px;background:linear-gradient(90deg,#7e7e7e 0,#7e7e7e 55%,#d8d8d8 100%);"></div>
<svg class="a" style="left:798px;top:134px" width="46" height="46" viewBox="0 0 46 46">
<circle cx="22.7" cy="22.8" r="21.4" fill="#3fad7b"/>
<path d="M22.7 9.5 V32.5 M11.3 23 L22.7 34 L34.1 23" stroke="#fff" stroke-width="4.6" fill="none" stroke-linejoin="miter"/>
</svg>
<div class="t" style='top:179.3px;font-size:13.3px;line-height:19px;color:#8a8a8a;font-weight:bold;font-family:"Liberation Serif", serif;left:821.5px;transform:translateX(-50%);'>Drop files here</div>
<div style="left:719.0px;top:215.5px;width:182.2px;height:99.0px;background:linear-gradient(#e8e9ea 0,#e6e7e8 24.8%,#dcdcdd 25.3%,#dddddf 81%,#d8d8d9 82%,#d9d9da 100%);border:1px solid #d2d2d3;border-radius:4px;box-sizing:border-box;box-shadow:0 1px 0 #f8f8f8;"></div>
<div class="t" style='top:220.9px;font-size:11.5px;line-height:17px;color:#3a3a3a;left:732.9px;'>Name:</div>
<div class="t" style='top:220.9px;font-size:11.5px;line-height:17px;color:#3a3a3a;left:771.0px;'>ALL.chr18.phase...</div>
<div class="t" style='top:242.3px;font-size:11.5px;line-height:17px;color:#3a3a3a;left:732.9px;'>Type:</div>
<div class="t" style='top:242.3px;font-size:11.5px;line-height:17px;color:#3a3a3a;left:771.0px;'>CompressVCFBlo...</div>
<div class="t" style='top:263.4px;font-size:11.5px;line-height:17px;color:#3a3a3a;left:732.9px;'>Size:</div>
<div class="t" style='top:263.4px;font-size:11.5px;line-height:17px;color:#3a3a3a;left:771.0px;'>416.21MB</div>
<div style="left:733.5px;top:292.0px;width:17.2px;height:16.3px;background:linear-gradient(#f4f4f4,#e4e4e4);border:1px solid #c2c2c2;border-radius:3px;box-sizing:border-box;"></div>
<div class="t" style='top:292.5px;font-size:11.5px;line-height:17px;color:#3a3a3a;left:756.3px;'>To be removed</div>
<div style="left:719.0px;top:320.7px;width:182.2px;height:99.0px;background:linear-gradient(#e8e9ea 0,#e6e7e8 24.8%,#dcdcdd 25.3%,#dddddf 81%,#d8d8d9 82%,#d9d9da 100%);border:1px solid #d2d2d3;border-radius:4px;box-sizing:border-box;box-shadow:0 1px 0 #f8f8f8;"></div>
<div class="t" style='top:326.1px;font-size:11.5px;line-height:17px;color:#3a3a3a;left:732.9px;'>Name:</div>
<div class="t" style='top:326.1px;font-size:11.5px;line-height:17px;color:#3a3a3a;left:771.0px;'>ALL.chr19.phase...</div>
<div class="t" style='top:347.5px;font-size:11.5px;line-height:17px;color:#3a3a3a;left:732.9px;'>Type:</div>
<div class="t" style='top:347.5px;font-size:11.5px;line-height:17px;color:#3a3a3a;left:771.0px;'>CompressVCFBlo...</div>
<div class="t" style='top:368.6px;font-size:11.5px;line-height:17px;color:#3a3a3a;left:732.9px;'>Size:</div>
<div class="t" style='top:368.6px;font-size:11.5px;line-height:17px;color:#3a3a3a;left:771.0px;'>342.86MB</div>
<div style="left:733.5px;top:397.2px;width:17.2px;height:16.3px;background:linear-gradient(#f4f4f4,#e4e4e4);border:1px solid #c2c2c2;border-radius:3px;box-sizing:border-box;"></div>
<div class="t" style='top:397.7px;font-size:11.5px;line-height:17px;color:#3a3a3a;left:756.3px;'>To be removed</div>
<div style="left:719.0px;top:425.9px;width:182.2px;height:99.0px;background:linear-gradient(#e8e9ea 0,#e6e7e8 24.8%,#dcdcdd 25.3%,#dddddf 81%,#d8d8d9 82%,#d9d9da 100%);border:1px solid #d2d2d3;border-radius:4px;box-sizing:border-box;box-shadow:0 1px 0 #f8f8f8;"></div>
<div class="t" style='top:431.3px;font-size:11.5px;line-height:17px;color:#3a3a3a;left:732.9px;'>Name:</div>
<div class="t" style='top:431.3px;font-size:11.5px;line-height:17px;color:#3a3a3a;left:771.0px;'>ALL.chr20.phase...</div>
<div class="t" style='top:452.7px;font-size:11.5px;line-height:17px;color:#3a3a3a;left:732.9px;'>Type:</div>
<div class="t" style='top:452.7px;font-size:11.5px;line-height:17px;color:#3a3a3a;left:771.0px;'>CompressVCFBlo...</div>
<div class="t" style='top:473.8px;font-size:11.5px;line-height:17px;color:#3a3a3a;left:732.9px;'>Size:</div>
<div class="t" style='top:473.8px;font-size:11.5px;line-height:17px;color:#3a3a3a;left:771.0px;'>325.85MB</div>
<div style="left:733.5px;top:502.4px;width:17.2px;height:16.3px;background:linear-gradient(#f4f4f4,#e4e4e4);border:1px solid #c2c2c2;border-radius:3px;box-sizing:border-box;"></div>
<div class="t" style='top:502.9px;font-size:11.5px;line-height:17px;color:#3a3a3a;left:756.3px;'>To be removed</div>
<div style="left:719.0px;top:531.1px;width:182.2px;height:99.0px;background:linear-gradient(#e8e9ea 0,#e6e7e8 24.8%,#dcdcdd 25.3%,#dddddf 81%,#d8d8d9 82%,#d9d9da 100%);border:1px solid #d2d2d3;border-radius:4px;box-sizing:border-box;box-shadow:0 1px 0 #f8f8f8;"></div>
<div class="t" style='top:536.5px;font-size:11.5px;line-height:17px;color:#3a3a3a;left:732.9px;'>Name:</div>
<div class="t" style='top:536.5px;font-size:11.5px;line-height:17px;color:#3a3a3a;left:771.0px;'>ALL.chr21.phase...</div>
<div class="t" style='top:557.9px;font-size:11.5px;line-height:17px;color:#3a3a3a;left:732.9px;'>Type:</div>
<div class="t" style='top:557.9px;font-size:11.5px;line-height:17px;color:#3a3a3a;left:771.0px;'>CompressVCFBlo...</div>
<div class="t" style='top:579.0px;font-size:11.5px;line-height:17px;color:#3a3a3a;left:732.9px;'>Size:</div>
<div class="t" style='top:579.0px;font-size:11.5px;line-height:17px;color:#3a3a3a;left:771.0px;'>208.49MB</div>
<div style="left:733.5px;top:607.6px;width:17.2px;height:16.3px;background:linear-gradient(#f4f4f4,#e4e4e4);border:1px solid #c2c2c2;border-radius:3px;box-sizing:border-box;"></div>
<div class="t" style='top:608.1px;font-size:11.5px;line-height:17px;color:#3a3a3a;left:756.3px;'>To be removed</div>
<div style="left:719.0px;top:636.3px;width:182.2px;height:99.0px;background:linear-gradient(#e8e9ea 0,#e6e7e8 24.8%,#dcdcdd 25.3%,#dddddf 81%,#d8d8d9 82%,#d9d9da 100%);border:1px solid #d2d2d3;border-radius:4px;box-sizing:border-box;box-shadow:0 1px 0 #f8f8f8;"></div>
<div class="t" style='top:641.7px;font-size:11.5px;line-height:17px;color:#3a3a3a;left:732.9px;'>Name:</div>
<div class="t" style='top:641.7px;font-size:11.5px;line-height:17px;color:#3a3a3a;left:771.0px;'>ALL.chr22.phase...</div>
<div class="t" style='top:663.1px;font-size:11.5px;line-height:17px;color:#3a3a3a;left:732.9px;'>Type:</div>
<div class="t" style='top:663.1px;font-size:11.5px;line-height:17px;color:#3a3a3a;left:771.0px;'>CompressVCFBlo...</div>
<div class="t" style='top:684.2px;font-size:11.5px;line-height:17px;color:#3a3a3a;left:732.9px;'>Size:</div>
<div class="t" style='top:684.2px;font-size:11.5px;line-height:17px;color:#3a3a3a;left:771.0px;'>204.52MB</div>
<div style="left:733.5px;top:712.8px;width:17.2px;height:16.3px;background:linear-gradient(#f4f4f4,#e4e4e4);border:1px solid #c2c2c2;border-radius:3px;box-sizing:border-box;"></div>
<div class="t" style='top:713.3px;font-size:11.5px;line-height:17px;color:#3a3a3a;left:756.3px;'>To be removed</div>
<div style="left:710.9px;top:780.6px;width:69.1px;height:23.2px;background:linear-gradient(#e9e9e9 0%,#dedede 45%,#d6d6d6 55%,#dcdcdc 100%);border:1px solid #b4b4b4;border-radius:3px;box-sizing:border-box;box-shadow:0 1px 0 rgba(255,255,255,.8);"></div>
<div class="t" style='top:783.3px;font-size:12.5px;line-height:18px;color:#2a2a2a;left:745.5px;transform:translateX(-50%);'>Select All</div>
<div style="left:805.3px;top:780.6px;width:105.5px;height:23.2px;background:#e6e7e7;border:1px solid #d0d0d0;border-radius:3px;box-sizing:border-box;"></div>
<div class="t" style='top:783.3px;font-size:12.5px;line-height:18px;color:#a9a9a9;left:858.0px;transform:translateX(-50%);'>Delete Selected</div>
<div class="t" style='top:133.4px;font-size:15.65px;line-height:22px;color:#222;font-weight:bold;left:953.3px;'>Sample Information</div>
<div style="left:1304.2px;top:133.3px;width:157.3px;height:23.5px;background:#fff;border:1px solid #c4c4c4;border-radius:3px;box-sizing:border-box;box-shadow:inset 0 1px 1px rgba(0,0,0,.06),0 0 1px rgba(0,0,0,.22);"></div>
<div style="left:1479.8px;top:133.3px;width:56.4px;height:23.5px;background:linear-gradient(#e9e9e9 0%,#dedede 45%,#d6d6d6 55%,#dcdcdc 100%);border:1px solid #b4b4b4;border-radius:3px;box-sizing:border-box;box-shadow:0 1px 0 rgba(255,255,255,.8);"></div>
<div class="t" style='top:136.2px;font-size:12.4px;line-height:18px;color:#2a2a2a;left:1508.0px;transform:translateX(-50%);'>Search</div>
<div style="left:951.6px;top:167.4px;width:584.9px;height:375.8px;background:#fff;border:1px solid #c4c4c4;box-sizing:border-box;"></div>
<div style="left:952.6px;top:168.4px;width:582.9px;height:25.6px;background:linear-gradient(#ededed 0,#e6e6e6 45%,#d6d6d6 55%,#d0d0d0 100%);border-bottom:1px solid #c2c2c2;box-sizing:border-box;"></div>
<div style="left:1036.8px;top:168.4px;width:1.1px;height:25.6px;background:#c6c6c6;"></div>
<div style="left:1037.9px;top:168.4px;width:0.9px;height:25.6px;background:#f4f4f4;"></div>
<div style="left:1213.8px;top:168.4px;width:1.1px;height:25.6px;background:#c6c6c6;"></div>
<div style="left:1214.9px;top:168.4px;width:0.9px;height:25.6px;background:#f4f4f4;"></div>
<div style="left:1299.5px;top:168.4px;width:1.1px;height:25.6px;background:#c6c6c6;"></div>
<div style="left:1300.6px;top:168.4px;width:0.9px;height:25.6px;background:#f4f4f4;"></div>
<div style="left:1521.5px;top:168.4px;width:1.1px;height:25.6px;background:#c6c6c6;"></div>
<div style="left:1522.6px;top:168.4px;width:0.9px;height:25.6px;background:#f4f4f4;"></div>
<div style="left:1036.9px;top:194.0px;width:1.0px;height:348.2px;background:#eeeeee;"></div>
<div style="left:1213.9px;top:194.0px;width:1.0px;height:348.2px;background:#eeeeee;"></div>
<div style="left:1299.6px;top:194.0px;width:1.0px;height:348.2px;background:#eeeeee;"></div>
<div class="t" style='top:172.3px;font-size:13.4px;line-height:19px;color:#222;font-weight:bold;left:995.5px;transform:translateX(-50%);'>Selected</div>
<div class="t" style='top:172.3px;font-size:13.4px;line-height:19px;color:#222;font-weight:bold;left:1126.0px;transform:translateX(-50%);'>Sample ID</div>
<div class="t" style='top:172.3px;font-size:13.4px;line-height:19px;color:#222;font-weight:bold;left:1257.7px;transform:translateX(-50%);'>Sex</div>
<div class="t" style='top:172.3px;font-size:13.4px;line-height:19px;color:#222;font-weight:bold;left:1411.3px;transform:translateX(-50%);'>Annotation</div>
<div style="left:952.6px;top:217.8px;width:569.4px;height:1.0px;background:#e9e9e9;"></div>
<div style="left:984.2px;top:198.2px;width:17.0px;height:16.4px;background:linear-gradient(#fff,#f4f4f4);border:1px solid #b9b9b9;border-radius:3px;box-sizing:border-box;"></div>
<div class="t" style='top:196.4px;font-size:13.2px;line-height:19px;color:#424242;left:1125.7px;transform:translateX(-50%);'>HG00096</div>
<div class="t" style='top:196.4px;font-size:13.2px;line-height:19px;color:#424242;left:1257.5px;transform:translateX(-50%);'>NA</div>
<div class="t" style='top:195.9px;font-size:13.6px;line-height:20px;color:#424242;letter-spacing:0.2px;left:1411.0px;transform:translateX(-50%);'>enter annotation</div>
<div style="left:952.6px;top:243.1px;width:569.4px;height:1.0px;background:#e9e9e9;"></div>
<div style="left:984.2px;top:223.4px;width:17.0px;height:16.4px;background:linear-gradient(#fff,#f4f4f4);border:1px solid #b9b9b9;border-radius:3px;box-sizing:border-box;"></div>
<svg class="a" style="left:985.4px;top:224.1px" width="15" height="14.5" viewBox="0 0 15 14.5" preserveAspectRatio="xMinYMin slice"><path d="M2.6 7.6 L5.7 11.4 L12.2 2.2" stroke="#1c1c1c" stroke-width="2" fill="none"/></svg>
<div class="t" style='top:221.6px;font-size:13.2px;line-height:19px;color:#424242;left:1125.7px;transform:translateX(-50%);'>HG00097</div>
<div class="t" style='top:221.6px;font-size:13.2px;line-height:19px;color:#424242;left:1257.5px;transform:translateX(-50%);'>NA</div>
<div class="t" style='top:221.1px;font-size:13.6px;line-height:20px;color:#424242;letter-spacing:0.2px;left:1411.0px;transform:translateX(-50%);'>enter annotation</div>
<div style="left:952.6px;top:268.3px;width:569.4px;height:1.0px;background:#e9e9e9;"></div>
<div style="left:984.2px;top:248.7px;width:17.0px;height:16.4px;background:linear-gradient(#fff,#f4f4f4);border:1px solid #b9b9b9;border-radius:3px;box-sizing:border-box;"></div>
<div class="t" style='top:246.9px;font-size:13.2px;line-height:19px;color:#424242;left:1125.7px;transform:translateX(-50%);'>HG00099</div>
<div class="t" style='top:246.9px;font-size:13.2px;line-height:19px;color:#424242;left:1257.5px;transform:translateX(-50%);'>NA</div>
<div class="t" style='top:246.4px;font-size:13.6px;line-height:20px;color:#424242;letter-spacing:0.2px;left:1411.0px;transform:translateX(-50%);'>enter annotation</div>
<div style="left:952.6px;top:293.6px;width:569.4px;height:1.0px;background:#e9e9e9;"></div>
<div style="left:984.2px;top:273.9px;width:17.0px;height:16.4px;background:linear-gradient(#fff,#f4f4f4);border:1px solid #b9b9b9;border-radius:3px;box-sizing:border-box;"></div>
<svg class="a" style="left:985.4px;top:274.6px" width="15" height="14.5" viewBox="0 0 15 14.5" preserveAspectRatio="xMinYMin slice"><path d="M2.6 7.6 L5.7 11.4 L12.2 2.2" stroke="#1c1c1c" stroke-width="2" fill="none"/></svg>
<div class="t" style='top:272.1px;font-size:13.2px;line-height:19px;color:#424242;left:1125.7px;transform:translateX(-50%);'>HG00100</div>
<div class="t" style='top:272.1px;font-size:13.2px;line-height:19px;color:#424242;left:1257.5px;transform:translateX(-50%);'>NA</div>
<div class="t" style='top:271.6px;font-size:13.6px;line-height:20px;color:#424242;letter-spacing:0.2px;left:1411.0px;transform:translateX(-50%);'>enter annotation</div>
<div style="left:952.6px;top:318.8px;width:569.4px;height:1.0px;background:#e9e9e9;"></div>
<div style="left:984.2px;top:299.2px;width:17.0px;height:16.4px;background:linear-gradient(#fff,#f4f4f4);border:1px solid #b9b9b9;border-radius:3px;box-sizing:border-box;"></div>
<svg class="a" style="left:985.4px;top:299.9px" width="15" height="14.5" viewBox="0 0 15 14.5" preserveAspectRatio="xMinYMin slice"><path d="M2.6 7.6 L5.7 11.4 L12.2 2.2" stroke="#1c1c1c" stroke-width="2" fill="none"/></svg>
<div class="t" style='top:297.4px;font-size:13.2px;line-height:19px;color:#424242;left:1125.7px;transform:translateX(-50%);'>HG00101</div>
<div class="t" style='top:297.4px;font-size:13.2px;line-height:19px;color:#424242;left:1257.5px;transform:translateX(-50%);'>NA</div>
<div class="t" style='top:296.9px;font-size:13.6px;line-height:20px;color:#424242;letter-spacing:0.2px;left:1411.0px;transform:translateX(-50%);'>enter annotation</div>
<div style="left:952.6px;top:344.0px;width:569.4px;height:1.0px;background:#e9e9e9;"></div>
<div style="left:984.2px;top:324.4px;width:17.0px;height:16.4px;background:linear-gradient(#fff,#f4f4f4);border:1px solid #b9b9b9;border-radius:3px;box-sizing:border-box;"></div>
<svg class="a" style="left:985.4px;top:325.1px" width="15" height="14.5" viewBox="0 0 15 14.5" preserveAspectRatio="xMinYMin slice"><path d="M2.6 7.6 L5.7 11.4 L12.2 2.2" stroke="#1c1c1c" stroke-width="2" fill="none"/></svg>
<div class="t" style='top:322.6px;font-size:13.2px;line-height:19px;color:#424242;left:1125.7px;transform:translateX(-50%);'>HG00102</div>
<div class="t" style='top:322.6px;font-size:13.2px;line-height:19px;color:#424242;left:1257.5px;transform:translateX(-50%);'>NA</div>
<div class="t" style='top:322.1px;font-size:13.6px;line-height:20px;color:#424242;letter-spacing:0.2px;left:1411.0px;transform:translateX(-50%);'>enter annotation</div>
<div style="left:952.6px;top:369.3px;width:569.4px;height:1.0px;background:#e9e9e9;"></div>
<div style="left:984.2px;top:349.6px;width:17.0px;height:16.4px;background:linear-gradient(#fff,#f4f4f4);border:1px solid #b9b9b9;border-radius:3px;box-sizing:border-box;"></div>
<svg class="a" style="left:985.4px;top:350.3px" width="15" height="14.5" viewBox="0 0 15 14.5" preserveAspectRatio="xMinYMin slice"><path d="M2.6 7.6 L5.7 11.4 L12.2 2.2" stroke="#1c1c1c" stroke-width="2" fill="none"/></svg>
<div class="t" style='top:347.8px;font-size:13.2px;line-height:19px;color:#424242;left:1125.7px;transform:translateX(-50%);'>HG00103</div>
<div class="t" style='top:347.8px;font-size:13.2px;line-height:19px;color:#424242;left:1257.5px;transform:translateX(-50%);'>NA</div>
<div class="t" style='top:347.3px;font-size:13.6px;line-height:20px;color:#424242;letter-spacing:0.2px;left:1411.0px;transform:translateX(-50%);'>enter annotation</div>
<div style="left:952.6px;top:394.5px;width:569.4px;height:1.0px;background:#e9e9e9;"></div>
<div style="left:984.2px;top:374.9px;width:17.0px;height:16.4px;background:linear-gradient(#fff,#f4f4f4);border:1px solid #b9b9b9;border-radius:3px;box-sizing:border-box;"></div>
<svg class="a" style="left:985.4px;top:375.6px" width="15" height="14.5" viewBox="0 0 15 14.5" preserveAspectRatio="xMinYMin slice"><path d="M2.6 7.6 L5.7 11.4 L12.2 2.2" stroke="#1c1c1c" stroke-width="2" fill="none"/></svg>
<div class="t" style='top:373.1px;font-size:13.2px;line-height:19px;color:#424242;left:1125.7px;transform:translateX(-50%);'>HG00105</div>
<div class="t" style='top:373.1px;font-size:13.2px;line-height:19px;color:#424242;left:1257.5px;transform:translateX(-50%);'>NA</div>
<div class="t" style='top:372.6px;font-size:13.6px;line-height:20px;color:#424242;letter-spacing:0.2px;left:1411.0px;transform:translateX(-50%);'>enter annotation</div>
<div style="left:952.6px;top:419.8px;width:569.4px;height:1.0px;background:#e9e9e9;"></div>
<div style="left:984.2px;top:400.1px;width:17.0px;height:16.4px;background:linear-gradient(#fff,#f4f4f4);border:1px solid #b9b9b9;border-radius:3px;box-sizing:border-box;"></div>
<svg class="a" style="left:985.4px;top:400.8px" width="15" height="14.5" viewBox="0 0 15 14.5" preserveAspectRatio="xMinYMin slice"><path d="M2.6 7.6 L5.7 11.4 L12.2 2.2" stroke="#1c1c1c" stroke-width="2" fill="none"/></svg>
<div class="t" style='top:398.3px;font-size:13.2px;line-height:19px;color:#424242;left:1125.7px;transform:translateX(-50%);'>HG00106</div>
<div class="t" style='top:398.3px;font-size:13.2px;line-height:19px;color:#424242;left:1257.5px;transform:translateX(-50%);'>NA</div>
<div class="t" style='top:397.8px;font-size:13.6px;line-height:20px;color:#424242;letter-spacing:0.2px;left:1411.0px;transform:translateX(-50%);'>enter annotation</div>
<div style="left:952.6px;top:445.0px;width:569.4px;height:1.0px;background:#e9e9e9;"></div>
<div style="left:984.2px;top:425.4px;width:17.0px;height:16.4px;background:linear-gradient(#fff,#f4f4f4);border:1px solid #b9b9b9;border-radius:3px;box-sizing:border-box;"></div>
<svg class="a" style="left:985.4px;top:426.1px" width="15" height="14.5" viewBox="0 0 15 14.5" preserveAspectRatio="xMinYMin slice"><path d="M2.6 7.6 L5.7 11.4 L12.2 2.2" stroke="#1c1c1c" stroke-width="2" fill="none"/></svg>
<div class="t" style='top:423.6px;font-size:13.2px;line-height:19px;color:#424242;left:1125.7px;transform:translateX(-50%);'>HG00107</div>
<div class="t" style='top:423.6px;font-size:13.2px;line-height:19px;color:#424242;left:1257.5px;transform:translateX(-50%);'>NA</div>
<div class="t" style='top:423.1px;font-size:13.6px;line-height:20px;color:#424242;letter-spacing:0.2px;left:1411.0px;transform:translateX(-50%);'>enter annotation</div>
<div style="left:952.6px;top:470.2px;width:569.4px;height:1.0px;background:#e9e9e9;"></div>
<div style="left:984.2px;top:450.6px;width:17.0px;height:16.4px;background:linear-gradient(#fff,#f4f4f4);border:1px solid #b9b9b9;border-radius:3px;box-sizing:border-box;"></div>
<svg class="a" style="left:985.4px;top:451.3px" width="15" height="14.5" viewBox="0 0 15 14.5" preserveAspectRatio="xMinYMin slice"><path d="M2.6 7.6 L5.7 11.4 L12.2 2.2" stroke="#1c1c1c" stroke-width="2" fill="none"/></svg>
<div class="t" style='top:448.8px;font-size:13.2px;line-height:19px;color:#424242;left:1125.7px;transform:translateX(-50%);'>HG00108</div>
<div class="t" style='top:448.8px;font-size:13.2px;line-height:19px;color:#424242;left:1257.5px;transform:translateX(-50%);'>NA</div>
<div class="t" style='top:448.3px;font-size:13.6px;line-height:20px;color:#424242;letter-spacing:0.2px;left:1411.0px;transform:translateX(-50%);'>enter annotation</div>
<div style="left:952.6px;top:495.5px;width:569.4px;height:1.0px;background:#e9e9e9;"></div>
<div style="left:984.2px;top:475.8px;width:17.0px;height:16.4px;background:linear-gradient(#fff,#f4f4f4);border:1px solid #b9b9b9;border-radius:3px;box-sizing:border-box;"></div>
<svg class="a" style="left:985.4px;top:476.5px" width="15" height="14.5" viewBox="0 0 15 14.5" preserveAspectRatio="xMinYMin slice"><path d="M2.6 7.6 L5.7 11.4 L12.2 2.2" stroke="#1c1c1c" stroke-width="2" fill="none"/></svg>
<div class="t" style='top:474.0px;font-size:13.2px;line-height:19px;color:#424242;left:1125.7px;transform:translateX(-50%);'>HG00109</div>
<div class="t" style='top:474.0px;font-size:13.2px;line-height:19px;color:#424242;left:1257.5px;transform:translateX(-50%);'>NA</div>
<div class="t" style='top:473.5px;font-size:13.6px;line-height:20px;color:#424242;letter-spacing:0.2px;left:1411.0px;transform:translateX(-50%);'>enter annotation</div>
<div style="left:952.6px;top:520.7px;width:569.4px;height:1.0px;background:#e9e9e9;"></div>
<div style="left:984.2px;top:501.1px;width:17.0px;height:16.4px;background:linear-gradient(#fff,#f4f4f4);border:1px solid #b9b9b9;border-radius:3px;box-sizing:border-box;"></div>
<svg class="a" style="left:985.4px;top:501.8px" width="15" height="14.5" viewBox="0 0 15 14.5" preserveAspectRatio="xMinYMin slice"><path d="M2.6 7.6 L5.7 11.4 L12.2 2.2" stroke="#1c1c1c" stroke-width="2" fill="none"/></svg>
<div class="t" style='top:499.3px;font-size:13.2px;line-height:19px;color:#424242;left:1125.7px;transform:translateX(-50%);'>HG00110</div>
<div class="t" style='top:499.3px;font-size:13.2px;line-height:19px;color:#424242;left:1257.5px;transform:translateX(-50%);'>NA</div>
<div class="t" style='top:498.8px;font-size:13.6px;line-height:20px;color:#424242;letter-spacing:0.2px;left:1411.0px;transform:translateX(-50%);'>enter annotation</div>
<div style="left:984.2px;top:526.3px;width:17.0px;height:15.9px;background:#fff;border:1px solid #b9b9b9;border-bottom:none;border-radius:3px 3px 0 0;box-sizing:border-box;"></div>
<svg class="a" style="left:985.4px;top:527.0px" width="15" height="14.5" viewBox="0 0 15 14.5" preserveAspectRatio="xMinYMin slice"><path d="M2.6 7.6 L5.7 11.4 L12.2 2.2" stroke="#1c1c1c" stroke-width="2" fill="none"/></svg>
<div class="t" style='top:524.5px;font-size:13.2px;line-height:19px;color:#424242;left:1125.7px;transform:translateX(-50%);'>HG00111</div>
<div class="t" style='top:524.5px;font-size:13.2px;line-height:19px;color:#424242;left:1257.5px;transform:translateX(-50%);'>NA</div>
<div class="t" style='top:524.0px;font-size:13.6px;line-height:20px;color:#424242;letter-spacing:0.2px;left:1411.0px;transform:translateX(-50%);'>enter annotation</div>
<div style="left:1522.6px;top:194.0px;width:12.9px;height:348.2px;background:#e9e9e9;border-left:1px solid #d2d2d2;box-sizing:border-box;"></div>
<svg class="a" style="left:1523.0px;top:194px" width="14" height="348" viewBox="0 0 14 348"><path d="M3.4 6.2 L7 2.8 L10.6 6.2" stroke="#6e6e6e" stroke-width="1.2" fill="none"/><path d="M3.4 341 L7 344.6 L10.6 341" stroke="#6e6e6e" stroke-width="1.2" fill="none"/><rect x="3.2" y="11.5" width="7.8" height="15" rx="1.5" fill="#f8f8f8" stroke="#b2b2b2" stroke-width="1"/></svg>
<div style="left:952.1px;top:556.5px;width:103.8px;height:22.7px;background:linear-gradient(#e9e9e9 0%,#dedede 45%,#d6d6d6 55%,#dcdcdc 100%);border:1px solid #b4b4b4;border-radius:3px;box-sizing:border-box;box-shadow:0 1px 0 rgba(255,255,255,.8);"></div>
<div class="t" style='top:559.0px;font-size:12.5px;line-height:18px;color:#2a2a2a;left:1004.0px;transform:translateX(-50%);'>Invert Selection</div>
<div class="t" style='top:559.1px;font-size:12.5px;line-height:18px;color:#333;left:1065.3px;'>Total samples :</div>
<div class="t" style='top:559.1px;font-size:12.5px;line-height:18px;color:#333;left:1169.8px;'>2504</div>
<div class="t" style='top:559.1px;font-size:12.5px;line-height:18px;color:#333;left:1217.8px;'>individuals ;</div>
<div class="t" style='top:559.1px;font-size:12.5px;line-height:18px;color:#333;left:1291.0px;'>Chosen samples :</div>
<div class="t" style='top:559.1px;font-size:12.5px;line-height:18px;color:#333;left:1412.0px;'>2502</div>
<div class="t" style='top:559.1px;font-size:12.5px;line-height:18px;color:#333;left:1458.2px;'>individuals .</div>
<div style="left:949.7px;top:591.8px;width:585.2px;height:81.8px;background:linear-gradient(90deg,#c2d8f1 0%,#c6dbf3 21.7%,#cbdff5 21.9%,#d0e2f6 40.4%,#d8e7f8 40.6%,#dceaf8 55.7%,#e3eefa 55.9%,#e7f0fa 70.4%,#eef4fb 70.6%,#f2f7fc 85.6%,#ffffff 85.9%,#fff 100%);"></div>
<svg class="a" style="left:958.5px;top:600px" width="10" height="9" viewBox="0 0 10 9"><path d="M1 1.2 H9 L5 7.6 Z" fill="#444"/></svg>
<div class="t" style='top:594.5px;font-size:13.4px;line-height:19px;color:#333;letter-spacing:0.2px;left:975.2px;'>Setting individuals</div>
<div class="t" style='top:635.8px;font-size:12.6px;line-height:18px;color:#2a2a2a;left:965.4px;'>Set selected individuals from external file</div>
<div style="left:1209.8px;top:633.0px;width:221.4px;height:23.5px;background:#fff;border:1px solid #c4c4c4;border-radius:3px;box-sizing:border-box;box-shadow:inset 0 1px 1px rgba(0,0,0,.06),0 0 1px rgba(0,0,0,.22);"></div>
<div style="left:1450.6px;top:633.0px;width:48.0px;height:23.5px;background:linear-gradient(#e9e9e9 0%,#dedede 45%,#d6d6d6 55%,#dcdcdc 100%);border:1px solid #b4b4b4;border-radius:3px;box-sizing:border-box;box-shadow:0 1px 0 rgba(255,255,255,.8);"></div>
<div class="t" style='top:635.9px;font-size:12.5px;line-height:18px;color:#2a2a2a;left:1474.6px;transform:translateX(-50%);'>Open</div>
<div style="left:949.7px;top:686.7px;width:585.2px;height:110.1px;background:linear-gradient(90deg,#edc8ac 0%,#efcfb7 34.1%,#f1d6c2 34.3%,#f2d9c6 50.7%,#f5e0d1 50.9%,#f6e3d5 65.3%,#f9ebe1 65.5%,#faeee5 78.2%,#fcf4ee 78.4%,#fdf7f2 89.3%,#ffffff 89.6%,#fff 100%);"></div>
<svg class="a" style="left:958.5px;top:694.3px" width="10" height="9" viewBox="0 0 10 9"><path d="M1 1.2 H9 L5 7.6 Z" fill="#444"/></svg>
<div class="t" style='top:689.5px;font-size:12.6px;line-height:18px;color:#2a2a2a;left:974.6px;'>Included and excluded chromosmal regions</div>
<div class="t" style='top:726.5px;font-size:12.6px;line-height:18px;color:#2a2a2a;left:965.6px;'>Bed file for the regions included</div>
<div class="t" style='top:763.9px;font-size:12.6px;line-height:18px;color:#2a2a2a;left:965.6px;'>Bed file for the regions excluded</div>
<div style="left:1209.8px;top:723.7px;width:221.4px;height:22.8px;background:#fff;border:1px solid #c4c4c4;border-radius:3px;box-sizing:border-box;box-shadow:inset 0 1px 1px rgba(0,0,0,.06),0 0 1px rgba(0,0,0,.22);"></div>
<div class="t" style='top:726.4px;font-size:12.4px;line-height:18px;color:#b0b0b0;left:1218.5px;'>sample.bed</div>
<div style="left:1209.8px;top:760.5px;width:221.4px;height:22.8px;background:#fff;border:1px solid #c4c4c4;border-radius:3px;box-sizing:border-box;box-shadow:inset 0 1px 1px rgba(0,0,0,.06),0 0 1px rgba(0,0,0,.22);"></div>
<div style="left:1450.6px;top:723.7px;width:48.0px;height:22.8px;background:linear-gradient(#e9e9e9 0%,#dedede 45%,#d6d6d6 55%,#dcdcdc 100%);border:1px solid #b4b4b4;border-radius:3px;box-sizing:border-box;box-shadow:0 1px 0 rgba(255,255,255,.8);"></div>
<div class="t" style='top:726.2px;font-size:12.5px;line-height:18px;color:#2a2a2a;left:1474.6px;transform:translateX(-50%);'>Open</div>
<div style="left:1450.6px;top:760.5px;width:48.0px;height:22.8px;background:linear-gradient(#e9e9e9 0%,#dedede 45%,#d6d6d6 55%,#dcdcdc 100%);border:1px solid #b4b4b4;border-radius:3px;box-sizing:border-box;box-shadow:0 1px 0 rgba(255,255,255,.8);"></div>
<div class="t" style='top:763.0px;font-size:12.5px;line-height:18px;color:#2a2a2a;left:1474.6px;transform:translateX(-50%);'>Open</div>
<svg class="a" style="left:1502.5px;top:726.5px" width="19" height="19" viewBox="0 0 19 19"><circle cx="9.3" cy="9.2" r="8.3" fill="#3b8fd6" stroke="#2a6fb2" stroke-width="1"/><circle cx="9.3" cy="9.2" r="6.4" fill="none" stroke="#9ccaf0" stroke-width=".8"/><text x="9.3" y="13.4" text-anchor="middle" font-family="Liberation Sans, sans-serif" font-size="11.5" font-weight="bold" fill="#fff">?</text></svg>
<div style="left:1554.5px;top:122.7px;width:191.5px;height:687.3px;background:#ecedee;border-top:1px solid #fdfdfd;border-left:1px solid #fdfdfd;border-right:1.6px solid #8a8a8a;border-bottom:2px solid #868686;box-sizing:border-box;"></div>
<div class="t" style='top:132.5px;font-size:13.6px;line-height:20px;color:#222;left:1641.8px;transform:translateX(-50%);'>Suitable methods</div>
<div style="left:1569.1px;top:161.4px;width:147.5px;height:62.2px;background:linear-gradient(#e6e6e7 0%,#e4e4e5 33%,#d7d7d8 34%,#d8d8d9 66%,#dcdcdd 67%,#dedede 100%);border:1px solid #c6c6c7;border-radius:4px;box-sizing:border-box;box-shadow:0 1px 0 #fafafa;"></div>
<div class="t" style='top:184.9px;font-size:12.6px;line-height:18px;color:#333;left:1642.8px;transform:translateX(-50%);'>VCF snapshot</div>
<div style="left:1569.1px;top:235.8px;width:147.5px;height:61.6px;background:linear-gradient(#e6e6e7 0%,#e4e4e5 33%,#d7d7d8 34%,#d8d8d9 66%,#dcdcdd 67%,#dedede 100%);border:1px solid #c6c6c7;border-radius:4px;box-sizing:border-box;box-shadow:0 1px 0 #fafafa;"></div>
<div class="t" style='top:259.0px;font-size:12.6px;line-height:18px;color:#333;left:1642.8px;transform:translateX(-50%);'>VCF tools</div>
<div style="left:1569.1px;top:309.3px;width:147.5px;height:61.5px;background:linear-gradient(#e6e6e7 0%,#e4e4e5 33%,#d7d7d8 34%,#d8d8d9 66%,#dcdcdd 67%,#dedede 100%);border:1px solid #c6c6c7;border-radius:4px;box-sizing:border-box;box-shadow:0 1px 0 #fafafa;"></div>
<div class="t" style='top:332.4px;font-size:12.6px;line-height:18px;color:#333;left:1642.8px;transform:translateX(-50%);'>Neutrality test</div>
<div style="left:1563.6px;top:385.2px;width:160.8px;height:67.0px;background:#b9d4f2;border-radius:5px 6px 5px 5px;border-top:2.4px solid #78828f;border-right:2.4px solid #78828f;border-bottom:1.2px solid #8f9aab;border-left:.6px solid #b2c6de;box-sizing:border-box;"></div>
<div class="t" style='top:410.7px;font-size:12.6px;line-height:18px;color:#33475f;left:1642.5px;transform:translateX(-50%);'>Genetic diversity</div>
<div style="left:1569.1px;top:467.3px;width:147.5px;height:61.1px;background:linear-gradient(#e6e6e7 0%,#e4e4e5 33%,#d7d7d8 34%,#d8d8d9 66%,#dcdcdd 67%,#dedede 100%);border:1px solid #c6c6c7;border-radius:4px;box-sizing:border-box;box-shadow:0 1px 0 #fafafa;"></div>
<div class="t" style='top:490.2px;font-size:12.6px;line-height:18px;color:#333;left:1642.8px;transform:translateX(-50%);'>HKA score</div>
<div style="left:1569.1px;top:540.2px;width:147.5px;height:61.9px;background:linear-gradient(#e6e6e7 0%,#e4e4e5 33%,#d7d7d8 34%,#d8d8d9 66%,#dcdcdd 67%,#dedede 100%);border:1px solid #c6c6c7;border-radius:4px;box-sizing:border-box;box-shadow:0 1px 0 #fafafa;"></div>
<div class="t" style='top:563.6px;font-size:12.6px;line-height:18px;color:#333;left:1642.8px;transform:translateX(-50%);'>PBS statistic</div>
<div style="left:1569.1px;top:614.6px;width:147.5px;height:61.7px;background:linear-gradient(#e6e6e7 0%,#e4e4e5 33%,#d7d7d8 34%,#d8d8d9 66%,#dcdcdd 67%,#dedede 100%);border:1px solid #c6c6c7;border-radius:4px;box-sizing:border-box;box-shadow:0 1px 0 #fafafa;"></div>
<div class="t" style="left:1642.8px;top:637.0px;transform:translateX(-50%);font-size:12.6px;line-height:19px;color:#333">F<span style="font-size:10px">ST</span> statistic</div>
<div style="left:1757.5px;top:88.3px;width:249.8px;height:748.0px;background:#eeeff0;border-left:1.5px solid #777;border-top:1.5px solid #777;box-sizing:border-box;"></div>
<div style="left:1759.0px;top:807.0px;width:248.3px;height:1.0px;background:#d0d0d0;"></div>
<div style="left:1764.7px;top:98.1px;width:142.1px;height:21.4px;background:#fff;border:1.2px solid #111;box-sizing:border-box;"></div>
<div style="left:1915.3px;top:97.1px;width:72.7px;height:23.8px;background:#dcdcdc;border:1px solid #a9a9a9;box-sizing:border-box;"></div>
<div class="t" style='top:100.0px;font-size:12.9px;line-height:19px;color:#222;left:1951.6px;transform:translateX(-50%);'>Search</div>
<div style="left:1766.9px;top:145.9px;width:1.0px;height:428.3px;background:repeating-linear-gradient(#a8a8a8 0,#a8a8a8 1px,transparent 1px,transparent 2px);"></div>
<div style="left:1786.8px;top:161.7px;width:1.0px;height:8.8px;background:repeating-linear-gradient(#a8a8a8 0,#a8a8a8 1px,transparent 1px,transparent 2px);"></div>
<div style="left:1786.8px;top:195.4px;width:1.0px;height:109.7px;background:repeating-linear-gradient(#a8a8a8 0,#a8a8a8 1px,transparent 1px,transparent 2px);"></div>
<div style="left:1786.8px;top:329.9px;width:1.0px;height:59.3px;background:repeating-linear-gradient(#a8a8a8 0,#a8a8a8 1px,transparent 1px,transparent 2px);"></div>
<div style="left:1786.8px;top:414.0px;width:1.0px;height:25.6px;background:repeating-linear-gradient(#a8a8a8 0,#a8a8a8 1px,transparent 1px,transparent 2px);"></div>
<div style="left:1786.8px;top:464.5px;width:1.0px;height:59.3px;background:repeating-linear-gradient(#a8a8a8 0,#a8a8a8 1px,transparent 1px,transparent 2px);"></div>
<div style="left:1786.8px;top:548.6px;width:1.0px;height:8.8px;background:repeating-linear-gradient(#a8a8a8 0,#a8a8a8 1px,transparent 1px,transparent 2px);"></div>
<div style="left:1786.8px;top:582.2px;width:1.0px;height:59.3px;background:repeating-linear-gradient(#a8a8a8 0,#a8a8a8 1px,transparent 1px,transparent 2px);"></div>
<svg class="a" style="left:1759.9px;top:127.9px" width="15" height="17" viewBox="0 0 15 17"><rect x="0.5" y="0.6" width="13.6" height="15.6" fill="#f4d46c"/><rect x="1.6" y="1.6" width="11.6" height="13.2" fill="#f9de86"/><path d="M4.6 1.6 V14.8 M8.4 1.6 V14.8" stroke="#f6d878" stroke-width="1.2"/><path d="M0.5 15.6 H14.1" stroke="#e9c458" stroke-width="1.2"/></svg>
<div class="t" style='top:126.9px;font-size:13.55px;line-height:20px;color:#1a1a1a;letter-spacing:0.05px;left:1779.7px;'>History Timeline</div>
<div style="left:1772.0px;top:153.2px;width:8.0px;height:1.0px;background:repeating-linear-gradient(90deg,#a8a8a8 0,#a8a8a8 1px,transparent 1px,transparent 2px);"></div>
<div style="left:1763.3px;top:149.1px;width:9.1px;height:9.1px;background:#fff;border:1px solid #9a9a9a;box-sizing:border-box;"></div>
<div style="left:1765.4px;top:153.1px;width:4.9px;height:1.1px;background:#66748e;"></div>
<svg class="a" style="left:1780.4px;top:145.1px" width="15" height="17" viewBox="0 0 15 17"><rect x="0.5" y="0.6" width="13.6" height="15.6" fill="#f4d46c"/><rect x="1.6" y="1.6" width="11.6" height="13.2" fill="#f9de86"/><path d="M4.6 1.6 V14.8 M8.4 1.6 V14.8" stroke="#f6d878" stroke-width="1.2"/><path d="M0.5 15.6 H14.1" stroke="#e9c458" stroke-width="1.2"/></svg>
<div class="t" style='top:144.2px;font-size:13.1px;line-height:19px;color:#1a1a1a;letter-spacing:0.05px;left:1800.0px;'>2019-03-29</div>
<div style="left:1787.8px;top:170.0px;width:9.8px;height:1.0px;background:repeating-linear-gradient(90deg,#a8a8a8 0,#a8a8a8 1px,transparent 1px,transparent 2px);"></div>
<svg class="a" style="left:1798.0px;top:161.3px" width="19" height="18" viewBox="0 0 19 18"><path d="M7.6 8.2 L13.6 15.6" stroke="#a9663c" stroke-width="3" stroke-linecap="round"/><path d="M7.6 8.2 L13.6 15.6" stroke="#d99a66" stroke-width="1.6" stroke-linecap="round"/><path d="M1.1 3.4 L6.5 1.1 C8.6 1.3 10 2.4 11.9 3.2 C13.8 4.4 15.6 5 17.4 5.7 C15.6 6 14 6.2 12.7 6.9 C11.4 7.8 10.6 9 9.9 10.2 L6.9 8.9 L3.2 5.6 Z" fill="#dc3138"/><path d="M3.4 4.2 L7 2.6 C9 3.2 10.4 4.2 12 5" stroke="#ef5d62" stroke-width="1.1" fill="none"/></svg>
<div class="t" style='top:161.0px;font-size:13.1px;line-height:19px;color:#1a1a1a;letter-spacing:0.05px;left:1820.8px;'>15:04:32 CAS:Neutrality test</div>
<div style="left:1772.0px;top:186.9px;width:8.0px;height:1.0px;background:repeating-linear-gradient(90deg,#a8a8a8 0,#a8a8a8 1px,transparent 1px,transparent 2px);"></div>
<div style="left:1763.3px;top:182.8px;width:9.1px;height:9.1px;background:#fff;border:1px solid #9a9a9a;box-sizing:border-box;"></div>
<div style="left:1765.4px;top:186.8px;width:4.9px;height:1.1px;background:#66748e;"></div>
<svg class="a" style="left:1780.4px;top:178.8px" width="15" height="17" viewBox="0 0 15 17"><rect x="0.5" y="0.6" width="13.6" height="15.6" fill="#f4d46c"/><rect x="1.6" y="1.6" width="11.6" height="13.2" fill="#f9de86"/><path d="M4.6 1.6 V14.8 M8.4 1.6 V14.8" stroke="#f6d878" stroke-width="1.2"/><path d="M0.5 15.6 H14.1" stroke="#e9c458" stroke-width="1.2"/></svg>
<div class="t" style='top:177.9px;font-size:13.1px;line-height:19px;color:#1a1a1a;letter-spacing:0.05px;left:1800.0px;'>2019-04-01</div>
<div style="left:1787.8px;top:203.7px;width:9.8px;height:1.0px;background:repeating-linear-gradient(90deg,#a8a8a8 0,#a8a8a8 1px,transparent 1px,transparent 2px);"></div>
<svg class="a" style="left:1798.0px;top:195.0px" width="19" height="18" viewBox="0 0 19 18"><path d="M7.6 8.2 L13.6 15.6" stroke="#a9663c" stroke-width="3" stroke-linecap="round"/><path d="M7.6 8.2 L13.6 15.6" stroke="#d99a66" stroke-width="1.6" stroke-linecap="round"/><path d="M1.1 3.4 L6.5 1.1 C8.6 1.3 10 2.4 11.9 3.2 C13.8 4.4 15.6 5 17.4 5.7 C15.6 6 14 6.2 12.7 6.9 C11.4 7.8 10.6 9 9.9 10.2 L6.9 8.9 L3.2 5.6 Z" fill="#dc3138"/><path d="M3.4 4.2 L7 2.6 C9 3.2 10.4 4.2 12 5" stroke="#ef5d62" stroke-width="1.1" fill="none"/></svg>
<div class="t" style='top:194.7px;font-size:13.1px;line-height:19px;color:#1a1a1a;letter-spacing:0.05px;left:1820.8px;'>10:18:13 MAP analysis</div>
<div style="left:1787.8px;top:220.5px;width:9.8px;height:1.0px;background:repeating-linear-gradient(90deg,#a8a8a8 0,#a8a8a8 1px,transparent 1px,transparent 2px);"></div>
<svg class="a" style="left:1798.0px;top:211.8px" width="19" height="18" viewBox="0 0 19 18"><path d="M7.6 8.2 L13.6 15.6" stroke="#7f7f7f" stroke-width="3" stroke-linecap="round"/><path d="M7.6 8.2 L13.6 15.6" stroke="#dcdcdc" stroke-width="1.4" stroke-linecap="round"/><path d="M1.1 3.4 L6.5 1.1 C8.6 1.3 10 2.4 11.9 3.2 C13.8 4.4 15.6 5 17.4 5.7 C15.6 6 14 6.2 12.7 6.9 C11.4 7.8 10.6 9 9.9 10.2 L6.9 8.9 L3.2 5.6 Z" fill="#c9c9c9" stroke="#858585" stroke-width="1"/><path d="M4.6 4.6 L9.4 8.4 M7.2 3.2 L11.4 6.4" stroke="#9a9a9a" stroke-width=".9" fill="none"/></svg>
<div class="t" style='top:211.5px;font-size:13.1px;line-height:19px;color:#1a1a1a;letter-spacing:0.05px;left:1820.8px;'>10:19:08 Simulator:1-pop</div>
<div style="left:1787.8px;top:237.3px;width:9.8px;height:1.0px;background:repeating-linear-gradient(90deg,#a8a8a8 0,#a8a8a8 1px,transparent 1px,transparent 2px);"></div>
<svg class="a" style="left:1798.0px;top:228.6px" width="19" height="18" viewBox="0 0 19 18"><path d="M7.6 8.2 L13.6 15.6" stroke="#7f7f7f" stroke-width="3" stroke-linecap="round"/><path d="M7.6 8.2 L13.6 15.6" stroke="#dcdcdc" stroke-width="1.4" stroke-linecap="round"/><path d="M1.1 3.4 L6.5 1.1 C8.6 1.3 10 2.4 11.9 3.2 C13.8 4.4 15.6 5 17.4 5.7 C15.6 6 14 6.2 12.7 6.9 C11.4 7.8 10.6 9 9.9 10.2 L6.9 8.9 L3.2 5.6 Z" fill="#c9c9c9" stroke="#858585" stroke-width="1"/><path d="M4.6 4.6 L9.4 8.4 M7.2 3.2 L11.4 6.4" stroke="#9a9a9a" stroke-width=".9" fill="none"/></svg>
<div class="t" style='top:228.3px;font-size:13.1px;line-height:19px;color:#1a1a1a;letter-spacing:0.05px;left:1820.8px;'>14:00:09 Genetic diversity</div>
<div style="left:1787.8px;top:254.1px;width:9.8px;height:1.0px;background:repeating-linear-gradient(90deg,#a8a8a8 0,#a8a8a8 1px,transparent 1px,transparent 2px);"></div>
<svg class="a" style="left:1798.0px;top:245.4px" width="19" height="18" viewBox="0 0 19 18"><path d="M7.6 8.2 L13.6 15.6" stroke="#7f7f7f" stroke-width="3" stroke-linecap="round"/><path d="M7.6 8.2 L13.6 15.6" stroke="#dcdcdc" stroke-width="1.4" stroke-linecap="round"/><path d="M1.1 3.4 L6.5 1.1 C8.6 1.3 10 2.4 11.9 3.2 C13.8 4.4 15.6 5 17.4 5.7 C15.6 6 14 6.2 12.7 6.9 C11.4 7.8 10.6 9 9.9 10.2 L6.9 8.9 L3.2 5.6 Z" fill="#c9c9c9" stroke="#858585" stroke-width="1"/><path d="M4.6 4.6 L9.4 8.4 M7.2 3.2 L11.4 6.4" stroke="#9a9a9a" stroke-width=".9" fill="none"/></svg>
<div class="t" style='top:245.1px;font-size:13.1px;line-height:19px;color:#1a1a1a;letter-spacing:0.05px;left:1820.8px;'>14:01:49 tree:n=16</div>
<div style="left:1787.8px;top:271.0px;width:9.8px;height:1.0px;background:repeating-linear-gradient(90deg,#a8a8a8 0,#a8a8a8 1px,transparent 1px,transparent 2px);"></div>
<svg class="a" style="left:1798.0px;top:262.3px" width="19" height="18" viewBox="0 0 19 18"><path d="M7.6 8.2 L13.6 15.6" stroke="#7f7f7f" stroke-width="3" stroke-linecap="round"/><path d="M7.6 8.2 L13.6 15.6" stroke="#dcdcdc" stroke-width="1.4" stroke-linecap="round"/><path d="M1.1 3.4 L6.5 1.1 C8.6 1.3 10 2.4 11.9 3.2 C13.8 4.4 15.6 5 17.4 5.7 C15.6 6 14 6.2 12.7 6.9 C11.4 7.8 10.6 9 9.9 10.2 L6.9 8.9 L3.2 5.6 Z" fill="#c9c9c9" stroke="#858585" stroke-width="1"/><path d="M4.6 4.6 L9.4 8.4 M7.2 3.2 L11.4 6.4" stroke="#9a9a9a" stroke-width=".9" fill="none"/></svg>
<div class="t" style='top:262.0px;font-size:13.1px;line-height:19px;color:#1a1a1a;letter-spacing:0.05px;left:1820.8px;'>17:08:43 tree:n=10</div>
<div style="left:1787.8px;top:287.8px;width:9.8px;height:1.0px;background:repeating-linear-gradient(90deg,#a8a8a8 0,#a8a8a8 1px,transparent 1px,transparent 2px);"></div>
<svg class="a" style="left:1798.0px;top:279.1px" width="19" height="18" viewBox="0 0 19 18"><path d="M7.6 8.2 L13.6 15.6" stroke="#a9663c" stroke-width="3" stroke-linecap="round"/><path d="M7.6 8.2 L13.6 15.6" stroke="#d99a66" stroke-width="1.6" stroke-linecap="round"/><path d="M1.1 3.4 L6.5 1.1 C8.6 1.3 10 2.4 11.9 3.2 C13.8 4.4 15.6 5 17.4 5.7 C15.6 6 14 6.2 12.7 6.9 C11.4 7.8 10.6 9 9.9 10.2 L6.9 8.9 L3.2 5.6 Z" fill="#dc3138"/><path d="M3.4 4.2 L7 2.6 C9 3.2 10.4 4.2 12 5" stroke="#ef5d62" stroke-width="1.1" fill="none"/></svg>
<div class="t" style='top:278.8px;font-size:13.1px;line-height:19px;color:#1a1a1a;letter-spacing:0.05px;left:1820.8px;'>17:25:16 tree:n=10</div>
<div style="left:1787.8px;top:304.6px;width:9.8px;height:1.0px;background:repeating-linear-gradient(90deg,#a8a8a8 0,#a8a8a8 1px,transparent 1px,transparent 2px);"></div>
<svg class="a" style="left:1798.0px;top:295.9px" width="19" height="18" viewBox="0 0 19 18"><path d="M7.6 8.2 L13.6 15.6" stroke="#7f7f7f" stroke-width="3" stroke-linecap="round"/><path d="M7.6 8.2 L13.6 15.6" stroke="#dcdcdc" stroke-width="1.4" stroke-linecap="round"/><path d="M1.1 3.4 L6.5 1.1 C8.6 1.3 10 2.4 11.9 3.2 C13.8 4.4 15.6 5 17.4 5.7 C15.6 6 14 6.2 12.7 6.9 C11.4 7.8 10.6 9 9.9 10.2 L6.9 8.9 L3.2 5.6 Z" fill="#c9c9c9" stroke="#858585" stroke-width="1"/><path d="M4.6 4.6 L9.4 8.4 M7.2 3.2 L11.4 6.4" stroke="#9a9a9a" stroke-width=".9" fill="none"/></svg>
<div class="t" style='top:295.6px;font-size:13.1px;line-height:19px;color:#1a1a1a;letter-spacing:0.05px;left:1820.8px;'>17:25:49 tree:n=10</div>
<div style="left:1772.0px;top:321.4px;width:8.0px;height:1.0px;background:repeating-linear-gradient(90deg,#a8a8a8 0,#a8a8a8 1px,transparent 1px,transparent 2px);"></div>
<div style="left:1763.3px;top:317.3px;width:9.1px;height:9.1px;background:#fff;border:1px solid #9a9a9a;box-sizing:border-box;"></div>
<div style="left:1765.4px;top:321.3px;width:4.9px;height:1.1px;background:#66748e;"></div>
<svg class="a" style="left:1780.4px;top:313.3px" width="15" height="17" viewBox="0 0 15 17"><rect x="0.5" y="0.6" width="13.6" height="15.6" fill="#f4d46c"/><rect x="1.6" y="1.6" width="11.6" height="13.2" fill="#f9de86"/><path d="M4.6 1.6 V14.8 M8.4 1.6 V14.8" stroke="#f6d878" stroke-width="1.2"/><path d="M0.5 15.6 H14.1" stroke="#e9c458" stroke-width="1.2"/></svg>
<div class="t" style='top:312.4px;font-size:13.1px;line-height:19px;color:#1a1a1a;letter-spacing:0.05px;left:1800.0px;'>2019-04-02</div>
<div style="left:1787.8px;top:338.2px;width:9.8px;height:1.0px;background:repeating-linear-gradient(90deg,#a8a8a8 0,#a8a8a8 1px,transparent 1px,transparent 2px);"></div>
<svg class="a" style="left:1798.0px;top:329.5px" width="19" height="18" viewBox="0 0 19 18"><path d="M7.6 8.2 L13.6 15.6" stroke="#a9663c" stroke-width="3" stroke-linecap="round"/><path d="M7.6 8.2 L13.6 15.6" stroke="#d99a66" stroke-width="1.6" stroke-linecap="round"/><path d="M1.1 3.4 L6.5 1.1 C8.6 1.3 10 2.4 11.9 3.2 C13.8 4.4 15.6 5 17.4 5.7 C15.6 6 14 6.2 12.7 6.9 C11.4 7.8 10.6 9 9.9 10.2 L6.9 8.9 L3.2 5.6 Z" fill="#dc3138"/><path d="M3.4 4.2 L7 2.6 C9 3.2 10.4 4.2 12 5" stroke="#ef5d62" stroke-width="1.1" fill="none"/></svg>
<div class="t" style='top:329.2px;font-size:13.1px;line-height:19px;color:#1a1a1a;letter-spacing:0.05px;left:1820.8px;'>10:18:13 MAP analysis</div>
<div style="left:1787.8px;top:355.1px;width:9.8px;height:1.0px;background:repeating-linear-gradient(90deg,#a8a8a8 0,#a8a8a8 1px,transparent 1px,transparent 2px);"></div>
<svg class="a" style="left:1798.0px;top:346.4px" width="19" height="18" viewBox="0 0 19 18"><path d="M7.6 8.2 L13.6 15.6" stroke="#7f7f7f" stroke-width="3" stroke-linecap="round"/><path d="M7.6 8.2 L13.6 15.6" stroke="#dcdcdc" stroke-width="1.4" stroke-linecap="round"/><path d="M1.1 3.4 L6.5 1.1 C8.6 1.3 10 2.4 11.9 3.2 C13.8 4.4 15.6 5 17.4 5.7 C15.6 6 14 6.2 12.7 6.9 C11.4 7.8 10.6 9 9.9 10.2 L6.9 8.9 L3.2 5.6 Z" fill="#c9c9c9" stroke="#858585" stroke-width="1"/><path d="M4.6 4.6 L9.4 8.4 M7.2 3.2 L11.4 6.4" stroke="#9a9a9a" stroke-width=".9" fill="none"/></svg>
<div class="t" style='top:346.1px;font-size:13.1px;line-height:19px;color:#1a1a1a;letter-spacing:0.05px;left:1820.8px;'>10:19:08 Simulator:1-pop</div>
<div style="left:1787.8px;top:371.9px;width:9.8px;height:1.0px;background:repeating-linear-gradient(90deg,#a8a8a8 0,#a8a8a8 1px,transparent 1px,transparent 2px);"></div>
<svg class="a" style="left:1798.0px;top:363.2px" width="19" height="18" viewBox="0 0 19 18"><path d="M7.6 8.2 L13.6 15.6" stroke="#7f7f7f" stroke-width="3" stroke-linecap="round"/><path d="M7.6 8.2 L13.6 15.6" stroke="#dcdcdc" stroke-width="1.4" stroke-linecap="round"/><path d="M1.1 3.4 L6.5 1.1 C8.6 1.3 10 2.4 11.9 3.2 C13.8 4.4 15.6 5 17.4 5.7 C15.6 6 14 6.2 12.7 6.9 C11.4 7.8 10.6 9 9.9 10.2 L6.9 8.9 L3.2 5.6 Z" fill="#c9c9c9" stroke="#858585" stroke-width="1"/><path d="M4.6 4.6 L9.4 8.4 M7.2 3.2 L11.4 6.4" stroke="#9a9a9a" stroke-width=".9" fill="none"/></svg>
<div class="t" style='top:362.9px;font-size:13.1px;line-height:19px;color:#1a1a1a;letter-spacing:0.05px;left:1820.8px;'>14:00:09 Genetic diversity</div>
<div style="left:1787.8px;top:388.7px;width:9.8px;height:1.0px;background:repeating-linear-gradient(90deg,#a8a8a8 0,#a8a8a8 1px,transparent 1px,transparent 2px);"></div>
<svg class="a" style="left:1798.0px;top:380.0px" width="19" height="18" viewBox="0 0 19 18"><path d="M7.6 8.2 L13.6 15.6" stroke="#a9663c" stroke-width="3" stroke-linecap="round"/><path d="M7.6 8.2 L13.6 15.6" stroke="#d99a66" stroke-width="1.6" stroke-linecap="round"/><path d="M1.1 3.4 L6.5 1.1 C8.6 1.3 10 2.4 11.9 3.2 C13.8 4.4 15.6 5 17.4 5.7 C15.6 6 14 6.2 12.7 6.9 C11.4 7.8 10.6 9 9.9 10.2 L6.9 8.9 L3.2 5.6 Z" fill="#dc3138"/><path d="M3.4 4.2 L7 2.6 C9 3.2 10.4 4.2 12 5" stroke="#ef5d62" stroke-width="1.1" fill="none"/></svg>
<div class="t" style='top:379.7px;font-size:13.1px;line-height:19px;color:#1a1a1a;letter-spacing:0.05px;left:1820.8px;'>14:01:49 tree:n=16</div>
<div style="left:1772.0px;top:405.5px;width:8.0px;height:1.0px;background:repeating-linear-gradient(90deg,#a8a8a8 0,#a8a8a8 1px,transparent 1px,transparent 2px);"></div>
<div style="left:1763.3px;top:401.4px;width:9.1px;height:9.1px;background:#fff;border:1px solid #9a9a9a;box-sizing:border-box;"></div>
<div style="left:1765.4px;top:405.4px;width:4.9px;height:1.1px;background:#66748e;"></div>
<svg class="a" style="left:1780.4px;top:397.4px" width="15" height="17" viewBox="0 0 15 17"><rect x="0.5" y="0.6" width="13.6" height="15.6" fill="#f4d46c"/><rect x="1.6" y="1.6" width="11.6" height="13.2" fill="#f9de86"/><path d="M4.6 1.6 V14.8 M8.4 1.6 V14.8" stroke="#f6d878" stroke-width="1.2"/><path d="M0.5 15.6 H14.1" stroke="#e9c458" stroke-width="1.2"/></svg>
<div class="t" style='top:396.5px;font-size:13.1px;line-height:19px;color:#1a1a1a;letter-spacing:0.05px;left:1800.0px;'>2019-04-03</div>
<div style="left:1787.8px;top:422.3px;width:9.8px;height:1.0px;background:repeating-linear-gradient(90deg,#a8a8a8 0,#a8a8a8 1px,transparent 1px,transparent 2px);"></div>
<svg class="a" style="left:1798.0px;top:413.6px" width="19" height="18" viewBox="0 0 19 18"><path d="M7.6 8.2 L13.6 15.6" stroke="#7f7f7f" stroke-width="3" stroke-linecap="round"/><path d="M7.6 8.2 L13.6 15.6" stroke="#dcdcdc" stroke-width="1.4" stroke-linecap="round"/><path d="M1.1 3.4 L6.5 1.1 C8.6 1.3 10 2.4 11.9 3.2 C13.8 4.4 15.6 5 17.4 5.7 C15.6 6 14 6.2 12.7 6.9 C11.4 7.8 10.6 9 9.9 10.2 L6.9 8.9 L3.2 5.6 Z" fill="#c9c9c9" stroke="#858585" stroke-width="1"/><path d="M4.6 4.6 L9.4 8.4 M7.2 3.2 L11.4 6.4" stroke="#9a9a9a" stroke-width=".9" fill="none"/></svg>
<div class="t" style='top:413.3px;font-size:13.1px;line-height:19px;color:#1a1a1a;letter-spacing:0.05px;left:1820.8px;'>16:25:58 MAP analysis</div>
<div style="left:1787.8px;top:439.2px;width:9.8px;height:1.0px;background:repeating-linear-gradient(90deg,#a8a8a8 0,#a8a8a8 1px,transparent 1px,transparent 2px);"></div>
<svg class="a" style="left:1798.0px;top:430.5px" width="19" height="18" viewBox="0 0 19 18"><path d="M7.6 8.2 L13.6 15.6" stroke="#7f7f7f" stroke-width="3" stroke-linecap="round"/><path d="M7.6 8.2 L13.6 15.6" stroke="#dcdcdc" stroke-width="1.4" stroke-linecap="round"/><path d="M1.1 3.4 L6.5 1.1 C8.6 1.3 10 2.4 11.9 3.2 C13.8 4.4 15.6 5 17.4 5.7 C15.6 6 14 6.2 12.7 6.9 C11.4 7.8 10.6 9 9.9 10.2 L6.9 8.9 L3.2 5.6 Z" fill="#c9c9c9" stroke="#858585" stroke-width="1"/><path d="M4.6 4.6 L9.4 8.4 M7.2 3.2 L11.4 6.4" stroke="#9a9a9a" stroke-width=".9" fill="none"/></svg>
<div class="t" style='top:430.2px;font-size:13.1px;line-height:19px;color:#1a1a1a;letter-spacing:0.05px;left:1820.8px;'>16:40:12 Genetic diversity</div>
<div style="left:1772.0px;top:456.0px;width:8.0px;height:1.0px;background:repeating-linear-gradient(90deg,#a8a8a8 0,#a8a8a8 1px,transparent 1px,transparent 2px);"></div>
<div style="left:1763.3px;top:451.9px;width:9.1px;height:9.1px;background:#fff;border:1px solid #9a9a9a;box-sizing:border-box;"></div>
<div style="left:1765.4px;top:455.9px;width:4.9px;height:1.1px;background:#66748e;"></div>
<svg class="a" style="left:1780.4px;top:447.9px" width="15" height="17" viewBox="0 0 15 17"><rect x="0.5" y="0.6" width="13.6" height="15.6" fill="#f4d46c"/><rect x="1.6" y="1.6" width="11.6" height="13.2" fill="#f9de86"/><path d="M4.6 1.6 V14.8 M8.4 1.6 V14.8" stroke="#f6d878" stroke-width="1.2"/><path d="M0.5 15.6 H14.1" stroke="#e9c458" stroke-width="1.2"/></svg>
<div class="t" style='top:447.0px;font-size:13.1px;line-height:19px;color:#1a1a1a;letter-spacing:0.05px;left:1800.0px;'>2019-04-05</div>
<div style="left:1787.8px;top:472.8px;width:9.8px;height:1.0px;background:repeating-linear-gradient(90deg,#a8a8a8 0,#a8a8a8 1px,transparent 1px,transparent 2px);"></div>
<svg class="a" style="left:1798.0px;top:464.1px" width="19" height="18" viewBox="0 0 19 18"><path d="M7.6 8.2 L13.6 15.6" stroke="#a9663c" stroke-width="3" stroke-linecap="round"/><path d="M7.6 8.2 L13.6 15.6" stroke="#d99a66" stroke-width="1.6" stroke-linecap="round"/><path d="M1.1 3.4 L6.5 1.1 C8.6 1.3 10 2.4 11.9 3.2 C13.8 4.4 15.6 5 17.4 5.7 C15.6 6 14 6.2 12.7 6.9 C11.4 7.8 10.6 9 9.9 10.2 L6.9 8.9 L3.2 5.6 Z" fill="#dc3138"/><path d="M3.4 4.2 L7 2.6 C9 3.2 10.4 4.2 12 5" stroke="#ef5d62" stroke-width="1.1" fill="none"/></svg>
<div class="t" style='top:463.8px;font-size:13.1px;line-height:19px;color:#1a1a1a;letter-spacing:0.05px;left:1820.8px;'>10:18:13 MAP analysis</div>
<div style="left:1787.8px;top:489.6px;width:9.8px;height:1.0px;background:repeating-linear-gradient(90deg,#a8a8a8 0,#a8a8a8 1px,transparent 1px,transparent 2px);"></div>
<svg class="a" style="left:1798.0px;top:480.9px" width="19" height="18" viewBox="0 0 19 18"><path d="M7.6 8.2 L13.6 15.6" stroke="#7f7f7f" stroke-width="3" stroke-linecap="round"/><path d="M7.6 8.2 L13.6 15.6" stroke="#dcdcdc" stroke-width="1.4" stroke-linecap="round"/><path d="M1.1 3.4 L6.5 1.1 C8.6 1.3 10 2.4 11.9 3.2 C13.8 4.4 15.6 5 17.4 5.7 C15.6 6 14 6.2 12.7 6.9 C11.4 7.8 10.6 9 9.9 10.2 L6.9 8.9 L3.2 5.6 Z" fill="#c9c9c9" stroke="#858585" stroke-width="1"/><path d="M4.6 4.6 L9.4 8.4 M7.2 3.2 L11.4 6.4" stroke="#9a9a9a" stroke-width=".9" fill="none"/></svg>
<div class="t" style='top:480.6px;font-size:13.1px;line-height:19px;color:#1a1a1a;letter-spacing:0.05px;left:1820.8px;'>10:19:08 Simulator:1-pop</div>
<div style="left:1787.8px;top:506.4px;width:9.8px;height:1.0px;background:repeating-linear-gradient(90deg,#a8a8a8 0,#a8a8a8 1px,transparent 1px,transparent 2px);"></div>
<svg class="a" style="left:1798.0px;top:497.7px" width="19" height="18" viewBox="0 0 19 18"><path d="M7.6 8.2 L13.6 15.6" stroke="#7f7f7f" stroke-width="3" stroke-linecap="round"/><path d="M7.6 8.2 L13.6 15.6" stroke="#dcdcdc" stroke-width="1.4" stroke-linecap="round"/><path d="M1.1 3.4 L6.5 1.1 C8.6 1.3 10 2.4 11.9 3.2 C13.8 4.4 15.6 5 17.4 5.7 C15.6 6 14 6.2 12.7 6.9 C11.4 7.8 10.6 9 9.9 10.2 L6.9 8.9 L3.2 5.6 Z" fill="#c9c9c9" stroke="#858585" stroke-width="1"/><path d="M4.6 4.6 L9.4 8.4 M7.2 3.2 L11.4 6.4" stroke="#9a9a9a" stroke-width=".9" fill="none"/></svg>
<div class="t" style='top:497.4px;font-size:13.1px;line-height:19px;color:#1a1a1a;letter-spacing:0.05px;left:1820.8px;'>14:00:09 Genetic diversity</div>
<div style="left:1787.8px;top:523.3px;width:9.8px;height:1.0px;background:repeating-linear-gradient(90deg,#a8a8a8 0,#a8a8a8 1px,transparent 1px,transparent 2px);"></div>
<svg class="a" style="left:1798.0px;top:514.6px" width="19" height="18" viewBox="0 0 19 18"><path d="M7.6 8.2 L13.6 15.6" stroke="#7f7f7f" stroke-width="3" stroke-linecap="round"/><path d="M7.6 8.2 L13.6 15.6" stroke="#dcdcdc" stroke-width="1.4" stroke-linecap="round"/><path d="M1.1 3.4 L6.5 1.1 C8.6 1.3 10 2.4 11.9 3.2 C13.8 4.4 15.6 5 17.4 5.7 C15.6 6 14 6.2 12.7 6.9 C11.4 7.8 10.6 9 9.9 10.2 L6.9 8.9 L3.2 5.6 Z" fill="#c9c9c9" stroke="#858585" stroke-width="1"/><path d="M4.6 4.6 L9.4 8.4 M7.2 3.2 L11.4 6.4" stroke="#9a9a9a" stroke-width=".9" fill="none"/></svg>
<div class="t" style='top:514.3px;font-size:13.1px;line-height:19px;color:#1a1a1a;letter-spacing:0.05px;left:1820.8px;'>14:01:49 tree:n=16</div>
<div style="left:1772.0px;top:540.1px;width:8.0px;height:1.0px;background:repeating-linear-gradient(90deg,#a8a8a8 0,#a8a8a8 1px,transparent 1px,transparent 2px);"></div>
<div style="left:1763.3px;top:536.0px;width:9.1px;height:9.1px;background:#fff;border:1px solid #9a9a9a;box-sizing:border-box;"></div>
<div style="left:1765.4px;top:540.0px;width:4.9px;height:1.1px;background:#66748e;"></div>
<svg class="a" style="left:1780.4px;top:532.0px" width="15" height="17" viewBox="0 0 15 17"><rect x="0.5" y="0.6" width="13.6" height="15.6" fill="#f4d46c"/><rect x="1.6" y="1.6" width="11.6" height="13.2" fill="#f9de86"/><path d="M4.6 1.6 V14.8 M8.4 1.6 V14.8" stroke="#f6d878" stroke-width="1.2"/><path d="M0.5 15.6 H14.1" stroke="#e9c458" stroke-width="1.2"/></svg>
<div class="t" style='top:531.1px;font-size:13.1px;line-height:19px;color:#1a1a1a;letter-spacing:0.05px;left:1800.0px;'>2019-04-09</div>
<div style="left:1787.8px;top:556.9px;width:9.8px;height:1.0px;background:repeating-linear-gradient(90deg,#a8a8a8 0,#a8a8a8 1px,transparent 1px,transparent 2px);"></div>
<svg class="a" style="left:1798.0px;top:548.2px" width="19" height="18" viewBox="0 0 19 18"><path d="M7.6 8.2 L13.6 15.6" stroke="#7f7f7f" stroke-width="3" stroke-linecap="round"/><path d="M7.6 8.2 L13.6 15.6" stroke="#dcdcdc" stroke-width="1.4" stroke-linecap="round"/><path d="M1.1 3.4 L6.5 1.1 C8.6 1.3 10 2.4 11.9 3.2 C13.8 4.4 15.6 5 17.4 5.7 C15.6 6 14 6.2 12.7 6.9 C11.4 7.8 10.6 9 9.9 10.2 L6.9 8.9 L3.2 5.6 Z" fill="#c9c9c9" stroke="#858585" stroke-width="1"/><path d="M4.6 4.6 L9.4 8.4 M7.2 3.2 L11.4 6.4" stroke="#9a9a9a" stroke-width=".9" fill="none"/></svg>
<div class="t" style='top:547.9px;font-size:13.1px;line-height:19px;color:#1a1a1a;letter-spacing:0.05px;left:1820.8px;'>08:34:39 Simulator:1-pop</div>
<div style="left:1772.0px;top:573.7px;width:8.0px;height:1.0px;background:repeating-linear-gradient(90deg,#a8a8a8 0,#a8a8a8 1px,transparent 1px,transparent 2px);"></div>
<div style="left:1763.3px;top:569.6px;width:9.1px;height:9.1px;background:#fff;border:1px solid #9a9a9a;box-sizing:border-box;"></div>
<div style="left:1765.4px;top:573.6px;width:4.9px;height:1.1px;background:#66748e;"></div>
<svg class="a" style="left:1780.4px;top:565.6px" width="15" height="17" viewBox="0 0 15 17"><rect x="0.5" y="0.6" width="13.6" height="15.6" fill="#f4d46c"/><rect x="1.6" y="1.6" width="11.6" height="13.2" fill="#f9de86"/><path d="M4.6 1.6 V14.8 M8.4 1.6 V14.8" stroke="#f6d878" stroke-width="1.2"/><path d="M0.5 15.6 H14.1" stroke="#e9c458" stroke-width="1.2"/></svg>
<div class="t" style='top:564.7px;font-size:13.1px;line-height:19px;color:#1a1a1a;letter-spacing:0.05px;left:1800.0px;'>demo</div>
<div style="left:1787.8px;top:590.5px;width:9.8px;height:1.0px;background:repeating-linear-gradient(90deg,#a8a8a8 0,#a8a8a8 1px,transparent 1px,transparent 2px);"></div>
<svg class="a" style="left:1798.0px;top:581.8px" width="19" height="18" viewBox="0 0 19 18"><path d="M7.6 8.2 L13.6 15.6" stroke="#7f7f7f" stroke-width="3" stroke-linecap="round"/><path d="M7.6 8.2 L13.6 15.6" stroke="#dcdcdc" stroke-width="1.4" stroke-linecap="round"/><path d="M1.1 3.4 L6.5 1.1 C8.6 1.3 10 2.4 11.9 3.2 C13.8 4.4 15.6 5 17.4 5.7 C15.6 6 14 6.2 12.7 6.9 C11.4 7.8 10.6 9 9.9 10.2 L6.9 8.9 L3.2 5.6 Z" fill="#c9c9c9" stroke="#858585" stroke-width="1"/><path d="M4.6 4.6 L9.4 8.4 M7.2 3.2 L11.4 6.4" stroke="#9a9a9a" stroke-width=".9" fill="none"/></svg>
<div class="t" style='top:581.5px;font-size:13.1px;line-height:19px;color:#1a1a1a;letter-spacing:0.05px;left:1820.8px;'>Genetic diversity:b123</div>
<div style="left:1787.8px;top:607.4px;width:9.8px;height:1.0px;background:repeating-linear-gradient(90deg,#a8a8a8 0,#a8a8a8 1px,transparent 1px,transparent 2px);"></div>
<svg class="a" style="left:1798.0px;top:598.7px" width="19" height="18" viewBox="0 0 19 18"><path d="M7.6 8.2 L13.6 15.6" stroke="#7f7f7f" stroke-width="3" stroke-linecap="round"/><path d="M7.6 8.2 L13.6 15.6" stroke="#dcdcdc" stroke-width="1.4" stroke-linecap="round"/><path d="M1.1 3.4 L6.5 1.1 C8.6 1.3 10 2.4 11.9 3.2 C13.8 4.4 15.6 5 17.4 5.7 C15.6 6 14 6.2 12.7 6.9 C11.4 7.8 10.6 9 9.9 10.2 L6.9 8.9 L3.2 5.6 Z" fill="#c9c9c9" stroke="#858585" stroke-width="1"/><path d="M4.6 4.6 L9.4 8.4 M7.2 3.2 L11.4 6.4" stroke="#9a9a9a" stroke-width=".9" fill="none"/></svg>
<div class="t" style='top:598.4px;font-size:13.1px;line-height:19px;color:#1a1a1a;letter-spacing:0.05px;left:1820.8px;'>geneTree:Protein124</div>
<div style="left:1787.8px;top:624.2px;width:9.8px;height:1.0px;background:repeating-linear-gradient(90deg,#a8a8a8 0,#a8a8a8 1px,transparent 1px,transparent 2px);"></div>
<svg class="a" style="left:1798.0px;top:615.5px" width="19" height="18" viewBox="0 0 19 18"><path d="M7.6 8.2 L13.6 15.6" stroke="#7f7f7f" stroke-width="3" stroke-linecap="round"/><path d="M7.6 8.2 L13.6 15.6" stroke="#dcdcdc" stroke-width="1.4" stroke-linecap="round"/><path d="M1.1 3.4 L6.5 1.1 C8.6 1.3 10 2.4 11.9 3.2 C13.8 4.4 15.6 5 17.4 5.7 C15.6 6 14 6.2 12.7 6.9 C11.4 7.8 10.6 9 9.9 10.2 L6.9 8.9 L3.2 5.6 Z" fill="#c9c9c9" stroke="#858585" stroke-width="1"/><path d="M4.6 4.6 L9.4 8.4 M7.2 3.2 L11.4 6.4" stroke="#9a9a9a" stroke-width=".9" fill="none"/></svg>
<div class="t" style='top:615.2px;font-size:13.1px;line-height:19px;color:#1a1a1a;letter-spacing:0.05px;left:1820.8px;'>poplulation model:q1</div>
<div style="left:1787.8px;top:641.0px;width:9.8px;height:1.0px;background:repeating-linear-gradient(90deg,#a8a8a8 0,#a8a8a8 1px,transparent 1px,transparent 2px);"></div>
<svg class="a" style="left:1798.0px;top:632.3px" width="19" height="18" viewBox="0 0 19 18"><path d="M7.6 8.2 L13.6 15.6" stroke="#a9663c" stroke-width="3" stroke-linecap="round"/><path d="M7.6 8.2 L13.6 15.6" stroke="#d99a66" stroke-width="1.6" stroke-linecap="round"/><path d="M1.1 3.4 L6.5 1.1 C8.6 1.3 10 2.4 11.9 3.2 C13.8 4.4 15.6 5 17.4 5.7 C15.6 6 14 6.2 12.7 6.9 C11.4 7.8 10.6 9 9.9 10.2 L6.9 8.9 L3.2 5.6 Z" fill="#dc3138"/><path d="M3.4 4.2 L7 2.6 C9 3.2 10.4 4.2 12 5" stroke="#ef5d62" stroke-width="1.1" fill="none"/></svg>
<div class="t" style='top:632.0px;font-size:13.1px;line-height:19px;color:#1a1a1a;letter-spacing:0.05px;left:1820.8px;'>Protein20190405:b123</div>
<div style="left:1763.3px;top:815.0px;width:13.3px;height:13.4px;background:#fff;border:1.2px solid #222;box-sizing:border-box;"></div>
<div class="t" style='top:811.6px;font-size:13.8px;line-height:20px;color:#1a1a1a;left:1781.3px;'>All unflagged</div>
<svg class="a" style="left:1937.5px;top:813.5px" width="15" height="17" viewBox="0 0 15 17"><path d="M1 3.3 H13.6 M5 3 V1.2 H9.6 V3" stroke="#222" stroke-width="1.3" fill="none"/><path d="M2.4 4.6 L3.2 15.6 H11.4 L12.2 4.6 Z" fill="none" stroke="#222" stroke-width="1.3"/><path d="M5.2 6.2 V14 M7.3 6.2 V14 M9.4 6.2 V14" stroke="#222" stroke-width="1"/></svg>
<div class="t" style='top:812.1px;font-size:13.1px;line-height:19px;color:#1a1a1a;left:1957.1px;'>Delete</div>
<div style="left:1641.0px;top:418.3px;width:306.3px;height:31.9px;background:rgba(30,30,30,.9);border-radius:6px;box-shadow:0 1px 3px rgba(0,0,0,.3);"></div>
<div class="t" style='top:424.8px;font-size:13.8px;line-height:20px;color:#f4f4f4;left:1794.2px;transform:translateX(-50%);'>Using sliding windows to calculate theta and pi.</div>
<svg class="a" style="left:1624px;top:409px" width="20" height="27" viewBox="0 0 20 27">
<path d="M6.2 1.6 C7.6 1.2 8.6 2 8.7 3.4 L9 10.2 C10 9.6 11 9.9 11.5 10.8 C12.5 10.2 13.6 10.6 14 11.6 C15.2 11.2 16.4 11.8 16.5 13.2 L16.6 19 C16.6 21 15.8 22.2 15.2 23.4 V25.4 H7.6 V23.6 C6 21.8 4.4 19.6 3 17.4 C2 15.8 3.6 14.6 4.9 15.8 L6 17 L5.6 3.4 C5.6 2.4 5.7 1.9 6.2 1.6 Z" fill="#fff" stroke="#111" stroke-width="1.2" stroke-linejoin="round"/>
<path d="M9 10.5 V15 M11.5 11 V15 M14 12 V15" stroke="#111" stroke-width="1"/>
</svg>
</div></body></html>
